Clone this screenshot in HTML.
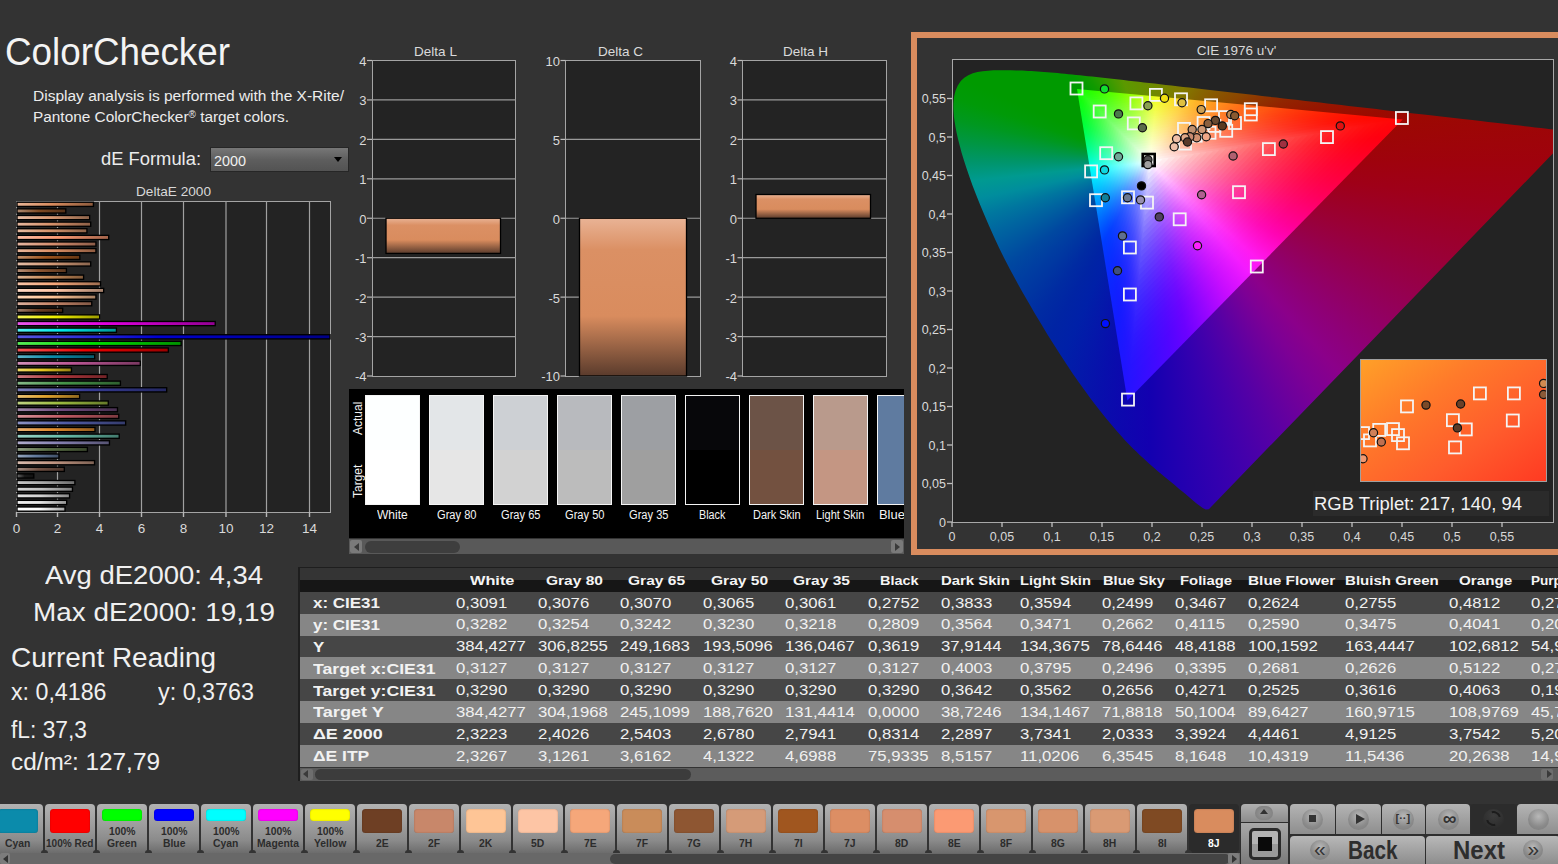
<!DOCTYPE html><html><head><meta charset="utf-8"><style>
*{margin:0;padding:0;box-sizing:border-box}
html,body{width:1558px;height:864px;overflow:hidden;background:#333333;font-family:"Liberation Sans",sans-serif;color:#ececec}
.ab{position:absolute;white-space:nowrap}
.bx{position:absolute}

</style></head><body>
<div class="ab" style="left:5.20px;top:32.83px;font-size:38.00px;line-height:38.00px;color:#f4f4f4;transform:scaleX(0.9685);transform-origin:0 0;">ColorChecker</div>
<div class="ab" style="left:33.00px;top:88.18px;font-size:15.50px;line-height:15.50px;color:#ececec;">Display analysis is performed with the X-Rite/</div>
<div class="ab" style="left:33px;top:109.18px;font-size:15.5px;line-height:15.5px;color:#ececec;transform:scaleX(0.9919);transform-origin:0 0">Pantone ColorChecker<span style="font-size:10px;vertical-align:4px;line-height:0">®</span> target colors.</div>
<div class="ab" style="left:101.00px;top:151.19px;font-size:17.50px;line-height:17.50px;color:#ececec;transform:scaleX(1.0492);transform-origin:0 0;">dE Formula:</div>
<div class="bx" style="left:209.5px;top:146.5px;width:139px;height:25px;background:linear-gradient(#777777,#5e5e5e 50%,#535353);border:1px solid #262626"></div>
<div class="ab" style="left:214.00px;top:152.88px;font-size:15.50px;line-height:15.50px;color:#f0f0f0;transform:scaleX(0.9280);transform-origin:0 0;">2000</div>
<div class="bx" style="left:334.2px;top:157.1px;width:0;height:0;border-left:4.3px solid transparent;border-right:4.3px solid transparent;border-top:5px solid #000"></div>
<div class="ab" style="left:136.00px;top:184.87px;font-size:13.50px;line-height:13.50px;color:#d8d8d8;transform:scaleX(1.0094);transform-origin:0 0;">DeltaE 2000</div>
<div class="bx" style="left:16px;top:201px;width:315px;height:312px;background:#232323;border:1px solid #a4a4a4"></div>
<svg class="bx" style="left:0;top:0" width="340" height="540"><defs><linearGradient id="bg0" x1="0" x2="1" y1="0" y2="0"><stop offset="0" stop-color="#ffffff"/><stop offset="0.45" stop-color="#ffffff"/><stop offset="1" stop-color="#a6a6a6"/></linearGradient><linearGradient id="bg1" x1="0" x2="1" y1="0" y2="0"><stop offset="0" stop-color="#efefef"/><stop offset="0.45" stop-color="#e6e6e6"/><stop offset="1" stop-color="#969696"/></linearGradient><linearGradient id="bg2" x1="0" x2="1" y1="0" y2="0"><stop offset="0" stop-color="#e2e2e2"/><stop offset="0.45" stop-color="#d2d2d2"/><stop offset="1" stop-color="#888888"/></linearGradient><linearGradient id="bg3" x1="0" x2="1" y1="0" y2="0"><stop offset="0" stop-color="#d6d6d6"/><stop offset="0.45" stop-color="#c0c0c0"/><stop offset="1" stop-color="#7d7d7d"/></linearGradient><linearGradient id="bg4" x1="0" x2="1" y1="0" y2="0"><stop offset="0" stop-color="#c6c6c6"/><stop offset="0.45" stop-color="#a8a8a8"/><stop offset="1" stop-color="#6d6d6d"/></linearGradient><linearGradient id="bg5" x1="0" x2="1" y1="0" y2="0"><stop offset="0" stop-color="#6a6a6a"/><stop offset="0.45" stop-color="#1a1a1a"/><stop offset="1" stop-color="#111111"/></linearGradient><linearGradient id="bg6" x1="0" x2="1" y1="0" y2="0"><stop offset="0" stop-color="#a48f85"/><stop offset="0.45" stop-color="#735244"/><stop offset="1" stop-color="#4b352c"/></linearGradient><linearGradient id="bg7" x1="0" x2="1" y1="0" y2="0"><stop offset="0" stop-color="#d7bbae"/><stop offset="0.45" stop-color="#c29682"/><stop offset="1" stop-color="#7e6254"/></linearGradient><linearGradient id="bg8" x1="0" x2="1" y1="0" y2="0"><stop offset="0" stop-color="#99a9bf"/><stop offset="0.45" stop-color="#627a9d"/><stop offset="1" stop-color="#404f66"/></linearGradient><linearGradient id="bg9" x1="0" x2="1" y1="0" y2="0"><stop offset="0" stop-color="#929f85"/><stop offset="0.45" stop-color="#576c43"/><stop offset="1" stop-color="#39462c"/></linearGradient><linearGradient id="bg10" x1="0" x2="1" y1="0" y2="0"><stop offset="0" stop-color="#b0accc"/><stop offset="0.45" stop-color="#8580b1"/><stop offset="1" stop-color="#565373"/></linearGradient><linearGradient id="bg11" x1="0" x2="1" y1="0" y2="0"><stop offset="0" stop-color="#9cd4c8"/><stop offset="0.45" stop-color="#67bdaa"/><stop offset="1" stop-color="#437b6e"/></linearGradient><linearGradient id="bg12" x1="0" x2="1" y1="0" y2="0"><stop offset="0" stop-color="#ebb376"/><stop offset="0.45" stop-color="#e08a2c"/><stop offset="1" stop-color="#925a1d"/></linearGradient><linearGradient id="bg13" x1="0" x2="1" y1="0" y2="0"><stop offset="0" stop-color="#8d94c5"/><stop offset="0.45" stop-color="#505ba6"/><stop offset="1" stop-color="#343b6c"/></linearGradient><linearGradient id="bg14" x1="0" x2="1" y1="0" y2="0"><stop offset="0" stop-color="#d7949a"/><stop offset="0.45" stop-color="#c15a63"/><stop offset="1" stop-color="#7d3a40"/></linearGradient><linearGradient id="bg15" x1="0" x2="1" y1="0" y2="0"><stop offset="0" stop-color="#a189aa"/><stop offset="0.45" stop-color="#6e4a7c"/><stop offset="1" stop-color="#483051"/></linearGradient><linearGradient id="bg16" x1="0" x2="1" y1="0" y2="0"><stop offset="0" stop-color="#bfd383"/><stop offset="0.45" stop-color="#9dbc40"/><stop offset="1" stop-color="#667a2a"/></linearGradient><linearGradient id="bg17" x1="0" x2="1" y1="0" y2="0"><stop offset="0" stop-color="#ebc377"/><stop offset="0.45" stop-color="#e0a32e"/><stop offset="1" stop-color="#926a1e"/></linearGradient><linearGradient id="bg18" x1="0" x2="1" y1="0" y2="0"><stop offset="0" stop-color="#7e81bb"/><stop offset="0.45" stop-color="#383d96"/><stop offset="1" stop-color="#242862"/></linearGradient><linearGradient id="bg19" x1="0" x2="1" y1="0" y2="0"><stop offset="0" stop-color="#87b989"/><stop offset="0.45" stop-color="#469449"/><stop offset="1" stop-color="#2e602f"/></linearGradient><linearGradient id="bg20" x1="0" x2="1" y1="0" y2="0"><stop offset="0" stop-color="#cb7c80"/><stop offset="0.45" stop-color="#af363c"/><stop offset="1" stop-color="#722327"/></linearGradient><linearGradient id="bg21" x1="0" x2="1" y1="0" y2="0"><stop offset="0" stop-color="#efdb6d"/><stop offset="0.45" stop-color="#e7c71f"/><stop offset="1" stop-color="#968114"/></linearGradient><linearGradient id="bg22" x1="0" x2="1" y1="0" y2="0"><stop offset="0" stop-color="#d391ba"/><stop offset="0.45" stop-color="#bb5695"/><stop offset="1" stop-color="#7a3861"/></linearGradient><linearGradient id="bg23" x1="0" x2="1" y1="0" y2="0"><stop offset="0" stop-color="#61b4c8"/><stop offset="0.45" stop-color="#0c8caa"/><stop offset="1" stop-color="#085b6e"/></linearGradient><linearGradient id="bg24" x1="0" x2="1" y1="0" y2="0"><stop offset="0" stop-color="#f45959"/><stop offset="0.45" stop-color="#ee0000"/><stop offset="1" stop-color="#9b0000"/></linearGradient><linearGradient id="bg25" x1="0" x2="1" y1="0" y2="0"><stop offset="0" stop-color="#59eb59"/><stop offset="0.45" stop-color="#00e000"/><stop offset="1" stop-color="#009200"/></linearGradient><linearGradient id="bg26" x1="0" x2="1" y1="0" y2="0"><stop offset="0" stop-color="#5959e0"/><stop offset="0.45" stop-color="#0000d0"/><stop offset="1" stop-color="#000087"/></linearGradient><linearGradient id="bg27" x1="0" x2="1" y1="0" y2="0"><stop offset="0" stop-color="#59f0f0"/><stop offset="0.45" stop-color="#00e8e8"/><stop offset="1" stop-color="#009797"/></linearGradient><linearGradient id="bg28" x1="0" x2="1" y1="0" y2="0"><stop offset="0" stop-color="#eb59eb"/><stop offset="0.45" stop-color="#e000e0"/><stop offset="1" stop-color="#920092"/></linearGradient><linearGradient id="bg29" x1="0" x2="1" y1="0" y2="0"><stop offset="0" stop-color="#f5f559"/><stop offset="0.45" stop-color="#f0f000"/><stop offset="1" stop-color="#9c9c00"/></linearGradient><linearGradient id="bg30" x1="0" x2="1" y1="0" y2="0"><stop offset="0" stop-color="#a18271"/><stop offset="0.45" stop-color="#6e3f24"/><stop offset="1" stop-color="#482917"/></linearGradient><linearGradient id="bg31" x1="0" x2="1" y1="0" y2="0"><stop offset="0" stop-color="#dbb19e"/><stop offset="0.45" stop-color="#c8876a"/><stop offset="1" stop-color="#825845"/></linearGradient><linearGradient id="bg32" x1="0" x2="1" y1="0" y2="0"><stop offset="0" stop-color="#fed9bb"/><stop offset="0.45" stop-color="#fec596"/><stop offset="1" stop-color="#a58062"/></linearGradient><linearGradient id="bg33" x1="0" x2="1" y1="0" y2="0"><stop offset="0" stop-color="#fed9c4"/><stop offset="0.45" stop-color="#fdc5a5"/><stop offset="1" stop-color="#a4806b"/></linearGradient><linearGradient id="bg34" x1="0" x2="1" y1="0" y2="0"><stop offset="0" stop-color="#f8c6a9"/><stop offset="0.45" stop-color="#f5a77a"/><stop offset="1" stop-color="#9f6d4f"/></linearGradient><linearGradient id="bg35" x1="0" x2="1" y1="0" y2="0"><stop offset="0" stop-color="#dcb494"/><stop offset="0.45" stop-color="#c98c5a"/><stop offset="1" stop-color="#835b3a"/></linearGradient><linearGradient id="bg36" x1="0" x2="1" y1="0" y2="0"><stop offset="0" stop-color="#b6917a"/><stop offset="0.45" stop-color="#8e5632"/><stop offset="1" stop-color="#5c3820"/></linearGradient><linearGradient id="bg37" x1="0" x2="1" y1="0" y2="0"><stop offset="0" stop-color="#e4bea7"/><stop offset="0.45" stop-color="#d59b78"/><stop offset="1" stop-color="#8a654e"/></linearGradient><linearGradient id="bg38" x1="0" x2="1" y1="0" y2="0"><stop offset="0" stop-color="#c1916d"/><stop offset="0.45" stop-color="#a0561f"/><stop offset="1" stop-color="#683814"/></linearGradient><linearGradient id="bg39" x1="0" x2="1" y1="0" y2="0"><stop offset="0" stop-color="#e8b69a"/><stop offset="0.45" stop-color="#dc8e64"/><stop offset="1" stop-color="#8f5c41"/></linearGradient><linearGradient id="bg40" x1="0" x2="1" y1="0" y2="0"><stop offset="0" stop-color="#e4b6a1"/><stop offset="0.45" stop-color="#d68e6e"/><stop offset="1" stop-color="#8b5c48"/></linearGradient><linearGradient id="bg41" x1="0" x2="1" y1="0" y2="0"><stop offset="0" stop-color="#fcbda4"/><stop offset="0.45" stop-color="#fb9a73"/><stop offset="1" stop-color="#a3644b"/></linearGradient><linearGradient id="bg42" x1="0" x2="1" y1="0" y2="0"><stop offset="0" stop-color="#e6bba1"/><stop offset="0.45" stop-color="#d8966e"/><stop offset="1" stop-color="#8c6248"/></linearGradient><linearGradient id="bg43" x1="0" x2="1" y1="0" y2="0"><stop offset="0" stop-color="#e5b89f"/><stop offset="0.45" stop-color="#d7926b"/><stop offset="1" stop-color="#8c5f46"/></linearGradient><linearGradient id="bg44" x1="0" x2="1" y1="0" y2="0"><stop offset="0" stop-color="#e6bda5"/><stop offset="0.45" stop-color="#d99a74"/><stop offset="1" stop-color="#8d644b"/></linearGradient><linearGradient id="bg45" x1="0" x2="1" y1="0" y2="0"><stop offset="0" stop-color="#ac8970"/><stop offset="0.45" stop-color="#7f4a23"/><stop offset="1" stop-color="#533017"/></linearGradient><linearGradient id="bg46" x1="0" x2="1" y1="0" y2="0"><stop offset="0" stop-color="#e6b496"/><stop offset="0.45" stop-color="#d98c5e"/><stop offset="1" stop-color="#8d5b3d"/></linearGradient></defs><line x1="57.5" y1="201" x2="57.5" y2="512.5" stroke="#a0a0a0" stroke-width="1.2"/><line x1="57.5" y1="512" x2="57.5" y2="517" stroke="#b8b8b8" stroke-width="1.4"/><line x1="99.5" y1="201" x2="99.5" y2="512.5" stroke="#a0a0a0" stroke-width="1.2"/><line x1="99.5" y1="512" x2="99.5" y2="517" stroke="#b8b8b8" stroke-width="1.4"/><line x1="141.5" y1="201" x2="141.5" y2="512.5" stroke="#a0a0a0" stroke-width="1.2"/><line x1="141.5" y1="512" x2="141.5" y2="517" stroke="#b8b8b8" stroke-width="1.4"/><line x1="183.5" y1="201" x2="183.5" y2="512.5" stroke="#a0a0a0" stroke-width="1.2"/><line x1="183.5" y1="512" x2="183.5" y2="517" stroke="#b8b8b8" stroke-width="1.4"/><line x1="226.0" y1="201" x2="226.0" y2="512.5" stroke="#a0a0a0" stroke-width="1.2"/><line x1="226.0" y1="512" x2="226.0" y2="517" stroke="#b8b8b8" stroke-width="1.4"/><line x1="266.5" y1="201" x2="266.5" y2="512.5" stroke="#a0a0a0" stroke-width="1.2"/><line x1="266.5" y1="512" x2="266.5" y2="517" stroke="#b8b8b8" stroke-width="1.4"/><line x1="309.5" y1="201" x2="309.5" y2="512.5" stroke="#a0a0a0" stroke-width="1.2"/><line x1="309.5" y1="512" x2="309.5" y2="517" stroke="#b8b8b8" stroke-width="1.4"/><line x1="16.5" y1="512" x2="16.5" y2="517" stroke="#b8b8b8" stroke-width="1.4"/><rect x="17" y="506.99" width="48.01" height="4.2" fill="url(#bg0)" stroke="#000" stroke-width="1.35"/><rect x="17" y="500.36" width="49.69" height="4.2" fill="url(#bg1)" stroke="#000" stroke-width="1.35"/><rect x="17" y="493.74" width="52.57" height="4.2" fill="url(#bg2)" stroke="#000" stroke-width="1.35"/><rect x="17" y="487.11" width="55.45" height="4.2" fill="url(#bg3)" stroke="#000" stroke-width="1.35"/><rect x="17" y="480.49" width="57.88" height="4.2" fill="url(#bg4)" stroke="#000" stroke-width="1.35"/><rect x="17" y="473.86" width="16.80" height="4.2" fill="url(#bg5)" stroke="#000" stroke-width="1.35"/><rect x="17" y="467.23" width="47.32" height="4.2" fill="url(#bg6)" stroke="#000" stroke-width="1.35"/><rect x="17" y="460.61" width="77.55" height="4.2" fill="url(#bg7)" stroke="#000" stroke-width="1.35"/><rect x="17" y="453.98" width="41.96" height="4.2" fill="url(#bg8)" stroke="#000" stroke-width="1.35"/><rect x="17" y="447.36" width="70.40" height="4.2" fill="url(#bg9)" stroke="#000" stroke-width="1.35"/><rect x="17" y="440.73" width="92.46" height="4.2" fill="url(#bg10)" stroke="#000" stroke-width="1.35"/><rect x="17" y="434.11" width="102.22" height="4.2" fill="url(#bg11)" stroke="#000" stroke-width="1.35"/><rect x="17" y="427.48" width="77.98" height="4.2" fill="url(#bg12)" stroke="#000" stroke-width="1.35"/><rect x="17" y="420.86" width="108.65" height="4.2" fill="url(#bg13)" stroke="#000" stroke-width="1.35"/><rect x="17" y="414.23" width="101.75" height="4.2" fill="url(#bg14)" stroke="#000" stroke-width="1.35"/><rect x="17" y="407.60" width="100.49" height="4.2" fill="url(#bg15)" stroke="#000" stroke-width="1.35"/><rect x="17" y="400.98" width="91.28" height="4.2" fill="url(#bg16)" stroke="#000" stroke-width="1.35"/><rect x="17" y="394.35" width="62.61" height="4.2" fill="url(#bg17)" stroke="#000" stroke-width="1.35"/><rect x="17" y="387.73" width="149.68" height="4.2" fill="url(#bg18)" stroke="#000" stroke-width="1.35"/><rect x="17" y="381.10" width="103.42" height="4.2" fill="url(#bg19)" stroke="#000" stroke-width="1.35"/><rect x="17" y="374.48" width="90.24" height="4.2" fill="url(#bg20)" stroke="#000" stroke-width="1.35"/><rect x="17" y="367.85" width="54.45" height="4.2" fill="url(#bg21)" stroke="#000" stroke-width="1.35"/><rect x="17" y="361.23" width="123.31" height="4.2" fill="url(#bg22)" stroke="#000" stroke-width="1.35"/><rect x="17" y="354.60" width="77.68" height="4.2" fill="url(#bg23)" stroke="#000" stroke-width="1.35"/><rect x="17" y="347.97" width="151.35" height="4.2" fill="url(#bg24)" stroke="#000" stroke-width="1.35"/><rect x="17" y="341.35" width="164.12" height="4.2" fill="url(#bg25)" stroke="#000" stroke-width="1.35"/><rect x="17" y="334.72" width="313.00" height="4.2" fill="url(#bg26)" stroke="#000" stroke-width="1.35"/><rect x="17" y="328.10" width="99.45" height="4.2" fill="url(#bg27)" stroke="#000" stroke-width="1.35"/><rect x="17" y="321.47" width="198.24" height="4.2" fill="url(#bg28)" stroke="#000" stroke-width="1.35"/><rect x="17" y="314.85" width="82.70" height="4.2" fill="url(#bg29)" stroke="#000" stroke-width="1.35"/><rect x="17" y="308.22" width="45.66" height="4.2" fill="url(#bg30)" stroke="#000" stroke-width="1.35"/><rect x="17" y="301.60" width="74.75" height="4.2" fill="url(#bg31)" stroke="#000" stroke-width="1.35"/><rect x="17" y="294.97" width="78.93" height="4.2" fill="url(#bg32)" stroke="#000" stroke-width="1.35"/><rect x="17" y="288.34" width="86.68" height="4.2" fill="url(#bg33)" stroke="#000" stroke-width="1.35"/><rect x="17" y="281.72" width="83.54" height="4.2" fill="url(#bg34)" stroke="#000" stroke-width="1.35"/><rect x="17" y="275.09" width="66.59" height="4.2" fill="url(#bg35)" stroke="#000" stroke-width="1.35"/><rect x="17" y="268.47" width="49.42" height="4.2" fill="url(#bg36)" stroke="#000" stroke-width="1.35"/><rect x="17" y="261.84" width="73.70" height="4.2" fill="url(#bg37)" stroke="#000" stroke-width="1.35"/><rect x="17" y="255.22" width="62.82" height="4.2" fill="url(#bg38)" stroke="#000" stroke-width="1.35"/><rect x="17" y="248.59" width="78.93" height="4.2" fill="url(#bg39)" stroke="#000" stroke-width="1.35"/><rect x="17" y="241.97" width="78.93" height="4.2" fill="url(#bg40)" stroke="#000" stroke-width="1.35"/><rect x="17" y="235.34" width="91.70" height="4.2" fill="url(#bg41)" stroke="#000" stroke-width="1.35"/><rect x="17" y="228.71" width="69.93" height="4.2" fill="url(#bg42)" stroke="#000" stroke-width="1.35"/><rect x="17" y="222.09" width="73.70" height="4.2" fill="url(#bg43)" stroke="#000" stroke-width="1.35"/><rect x="17" y="215.46" width="72.66" height="4.2" fill="url(#bg44)" stroke="#000" stroke-width="1.35"/><rect x="17" y="208.84" width="48.79" height="4.2" fill="url(#bg45)" stroke="#000" stroke-width="1.35"/><rect x="17" y="202.21" width="76.42" height="4.2" fill="url(#bg46)" stroke="#000" stroke-width="1.35"/></svg>
<div class="ab" style="left:12.75px;top:521.97px;font-size:13.50px;line-height:13.50px;color:#dadada;">0</div>
<div class="ab" style="left:53.75px;top:521.97px;font-size:13.50px;line-height:13.50px;color:#dadada;">2</div>
<div class="ab" style="left:95.75px;top:521.97px;font-size:13.50px;line-height:13.50px;color:#dadada;">4</div>
<div class="ab" style="left:137.75px;top:521.97px;font-size:13.50px;line-height:13.50px;color:#dadada;">6</div>
<div class="ab" style="left:179.75px;top:521.97px;font-size:13.50px;line-height:13.50px;color:#dadada;">8</div>
<div class="ab" style="left:218.49px;top:521.97px;font-size:13.50px;line-height:13.50px;color:#dadada;">10</div>
<div class="ab" style="left:258.99px;top:521.97px;font-size:13.50px;line-height:13.50px;color:#dadada;">12</div>
<div class="ab" style="left:301.99px;top:521.97px;font-size:13.50px;line-height:13.50px;color:#dadada;">14</div>
<div class="bx" style="left:371.5px;top:60.0px;width:144.5px;height:316.5px;background:#232323;border:1px solid #a4a4a4"></div>
<svg class="bx" style="left:0;top:0" width="910" height="390"><line x1="367.0" y1="60.50" x2="372.0" y2="60.50" stroke="#bbbbbb" stroke-width="1.2"/><line x1="372.0" y1="99.94" x2="515.5" y2="99.94" stroke="#9a9a9a" stroke-width="1.2"/><line x1="367.0" y1="99.94" x2="372.0" y2="99.94" stroke="#bbbbbb" stroke-width="1.2"/><line x1="372.0" y1="139.38" x2="515.5" y2="139.38" stroke="#9a9a9a" stroke-width="1.2"/><line x1="367.0" y1="139.38" x2="372.0" y2="139.38" stroke="#bbbbbb" stroke-width="1.2"/><line x1="372.0" y1="178.81" x2="515.5" y2="178.81" stroke="#9a9a9a" stroke-width="1.2"/><line x1="367.0" y1="178.81" x2="372.0" y2="178.81" stroke="#bbbbbb" stroke-width="1.2"/><line x1="372.0" y1="218.25" x2="515.5" y2="218.25" stroke="#9a9a9a" stroke-width="1.2"/><line x1="367.0" y1="218.25" x2="372.0" y2="218.25" stroke="#bbbbbb" stroke-width="1.2"/><line x1="372.0" y1="257.69" x2="515.5" y2="257.69" stroke="#9a9a9a" stroke-width="1.2"/><line x1="367.0" y1="257.69" x2="372.0" y2="257.69" stroke="#bbbbbb" stroke-width="1.2"/><line x1="372.0" y1="297.12" x2="515.5" y2="297.12" stroke="#9a9a9a" stroke-width="1.2"/><line x1="367.0" y1="297.12" x2="372.0" y2="297.12" stroke="#bbbbbb" stroke-width="1.2"/><line x1="372.0" y1="336.56" x2="515.5" y2="336.56" stroke="#9a9a9a" stroke-width="1.2"/><line x1="367.0" y1="336.56" x2="372.0" y2="336.56" stroke="#bbbbbb" stroke-width="1.2"/><line x1="367.0" y1="376.00" x2="372.0" y2="376.00" stroke="#bbbbbb" stroke-width="1.2"/><defs><linearGradient id="dgL" x1="0" x2="0" y1="0" y2="1"><stop offset="0" stop-color="#e9b395"/><stop offset="0.2" stop-color="#db9064"/><stop offset="0.62" stop-color="#d98c5e"/><stop offset="1" stop-color="#5a3b2c"/></linearGradient></defs><rect x="386.0" y="218.2" width="114.5" height="35.2" fill="url(#dgL)" stroke="#000" stroke-width="1.3"/></svg>
<div class="ab" style="left:414.11px;top:44.87px;font-size:13.50px;line-height:13.50px;color:#dadada;">Delta L</div>
<div class="ab" style="left:359.27px;top:54.90px;font-size:13.00px;line-height:13.00px;color:#dadada;">4</div>
<div class="ab" style="left:359.27px;top:94.33px;font-size:13.00px;line-height:13.00px;color:#dadada;">3</div>
<div class="ab" style="left:359.27px;top:133.77px;font-size:13.00px;line-height:13.00px;color:#dadada;">2</div>
<div class="ab" style="left:359.27px;top:173.21px;font-size:13.00px;line-height:13.00px;color:#dadada;">1</div>
<div class="ab" style="left:359.27px;top:212.65px;font-size:13.00px;line-height:13.00px;color:#dadada;">0</div>
<div class="ab" style="left:354.94px;top:252.08px;font-size:13.00px;line-height:13.00px;color:#dadada;">-1</div>
<div class="ab" style="left:354.94px;top:291.52px;font-size:13.00px;line-height:13.00px;color:#dadada;">-2</div>
<div class="ab" style="left:354.94px;top:330.96px;font-size:13.00px;line-height:13.00px;color:#dadada;">-3</div>
<div class="ab" style="left:354.94px;top:370.40px;font-size:13.00px;line-height:13.00px;color:#dadada;">-4</div>
<div class="bx" style="left:565.0px;top:60.0px;width:136.0px;height:316.5px;background:#232323;border:1px solid #a4a4a4"></div>
<svg class="bx" style="left:0;top:0" width="910" height="390"><line x1="560.5" y1="60.50" x2="565.5" y2="60.50" stroke="#bbbbbb" stroke-width="1.2"/><line x1="565.5" y1="139.38" x2="700.5" y2="139.38" stroke="#9a9a9a" stroke-width="1.2"/><line x1="560.5" y1="139.38" x2="565.5" y2="139.38" stroke="#bbbbbb" stroke-width="1.2"/><line x1="565.5" y1="218.25" x2="700.5" y2="218.25" stroke="#9a9a9a" stroke-width="1.2"/><line x1="560.5" y1="218.25" x2="565.5" y2="218.25" stroke="#bbbbbb" stroke-width="1.2"/><line x1="565.5" y1="297.12" x2="700.5" y2="297.12" stroke="#9a9a9a" stroke-width="1.2"/><line x1="560.5" y1="297.12" x2="565.5" y2="297.12" stroke="#bbbbbb" stroke-width="1.2"/><line x1="560.5" y1="376.00" x2="565.5" y2="376.00" stroke="#bbbbbb" stroke-width="1.2"/><defs><linearGradient id="dgC" x1="0" x2="0" y1="0" y2="1"><stop offset="0" stop-color="#e9b395"/><stop offset="0.2" stop-color="#db9064"/><stop offset="0.62" stop-color="#d98c5e"/><stop offset="1" stop-color="#5a3b2c"/></linearGradient></defs><rect x="579.5" y="218.2" width="107.0" height="157.8" fill="url(#dgC)" stroke="#000" stroke-width="1.3"/></svg>
<div class="ab" style="left:597.99px;top:44.87px;font-size:13.50px;line-height:13.50px;color:#dadada;">Delta C</div>
<div class="ab" style="left:545.54px;top:54.90px;font-size:13.00px;line-height:13.00px;color:#dadada;">10</div>
<div class="ab" style="left:552.77px;top:133.77px;font-size:13.00px;line-height:13.00px;color:#dadada;">5</div>
<div class="ab" style="left:552.77px;top:212.65px;font-size:13.00px;line-height:13.00px;color:#dadada;">0</div>
<div class="ab" style="left:548.44px;top:291.52px;font-size:13.00px;line-height:13.00px;color:#dadada;">-5</div>
<div class="ab" style="left:541.21px;top:370.40px;font-size:13.00px;line-height:13.00px;color:#dadada;">-10</div>
<div class="bx" style="left:742.0px;top:60.0px;width:145.0px;height:316.5px;background:#232323;border:1px solid #a4a4a4"></div>
<svg class="bx" style="left:0;top:0" width="910" height="390"><line x1="737.5" y1="60.50" x2="742.5" y2="60.50" stroke="#bbbbbb" stroke-width="1.2"/><line x1="742.5" y1="99.94" x2="886.5" y2="99.94" stroke="#9a9a9a" stroke-width="1.2"/><line x1="737.5" y1="99.94" x2="742.5" y2="99.94" stroke="#bbbbbb" stroke-width="1.2"/><line x1="742.5" y1="139.38" x2="886.5" y2="139.38" stroke="#9a9a9a" stroke-width="1.2"/><line x1="737.5" y1="139.38" x2="742.5" y2="139.38" stroke="#bbbbbb" stroke-width="1.2"/><line x1="742.5" y1="178.81" x2="886.5" y2="178.81" stroke="#9a9a9a" stroke-width="1.2"/><line x1="737.5" y1="178.81" x2="742.5" y2="178.81" stroke="#bbbbbb" stroke-width="1.2"/><line x1="742.5" y1="218.25" x2="886.5" y2="218.25" stroke="#9a9a9a" stroke-width="1.2"/><line x1="737.5" y1="218.25" x2="742.5" y2="218.25" stroke="#bbbbbb" stroke-width="1.2"/><line x1="742.5" y1="257.69" x2="886.5" y2="257.69" stroke="#9a9a9a" stroke-width="1.2"/><line x1="737.5" y1="257.69" x2="742.5" y2="257.69" stroke="#bbbbbb" stroke-width="1.2"/><line x1="742.5" y1="297.12" x2="886.5" y2="297.12" stroke="#9a9a9a" stroke-width="1.2"/><line x1="737.5" y1="297.12" x2="742.5" y2="297.12" stroke="#bbbbbb" stroke-width="1.2"/><line x1="742.5" y1="336.56" x2="886.5" y2="336.56" stroke="#9a9a9a" stroke-width="1.2"/><line x1="737.5" y1="336.56" x2="742.5" y2="336.56" stroke="#bbbbbb" stroke-width="1.2"/><line x1="737.5" y1="376.00" x2="742.5" y2="376.00" stroke="#bbbbbb" stroke-width="1.2"/><defs><linearGradient id="dgH" x1="0" x2="0" y1="0" y2="1"><stop offset="0" stop-color="#e9b395"/><stop offset="0.2" stop-color="#db9064"/><stop offset="0.62" stop-color="#d98c5e"/><stop offset="1" stop-color="#5a3b2c"/></linearGradient></defs><rect x="756.0" y="194.5" width="114.5" height="23.8" fill="url(#dgH)" stroke="#000" stroke-width="1.3"/></svg>
<div class="ab" style="left:782.99px;top:44.87px;font-size:13.50px;line-height:13.50px;color:#dadada;">Delta H</div>
<div class="ab" style="left:729.77px;top:54.90px;font-size:13.00px;line-height:13.00px;color:#dadada;">4</div>
<div class="ab" style="left:729.77px;top:94.33px;font-size:13.00px;line-height:13.00px;color:#dadada;">3</div>
<div class="ab" style="left:729.77px;top:133.77px;font-size:13.00px;line-height:13.00px;color:#dadada;">2</div>
<div class="ab" style="left:729.77px;top:173.21px;font-size:13.00px;line-height:13.00px;color:#dadada;">1</div>
<div class="ab" style="left:729.77px;top:212.65px;font-size:13.00px;line-height:13.00px;color:#dadada;">0</div>
<div class="ab" style="left:725.44px;top:252.08px;font-size:13.00px;line-height:13.00px;color:#dadada;">-1</div>
<div class="ab" style="left:725.44px;top:291.52px;font-size:13.00px;line-height:13.00px;color:#dadada;">-2</div>
<div class="ab" style="left:725.44px;top:330.96px;font-size:13.00px;line-height:13.00px;color:#dadada;">-3</div>
<div class="ab" style="left:725.44px;top:370.40px;font-size:13.00px;line-height:13.00px;color:#dadada;">-4</div>
<div class="bx" style="left:349px;top:389px;width:555px;height:149px;background:#000;overflow:hidden">
<div class="bx" style="left:16px;top:6px;width:55px;height:110px;border:1.5px solid #f4f4f4;background:linear-gradient(#fdffff 0,#fdffff 50%,#ffffff 50%,#ffffff 100%)"></div>
<div class="bx" style="left:80px;top:6px;width:55px;height:110px;border:1.5px solid #f4f4f4;background:linear-gradient(#e3e6e8 0,#e3e6e8 50%,#e6e6e6 50%,#e6e6e6 100%)"></div>
<div class="bx" style="left:144px;top:6px;width:55px;height:110px;border:1.5px solid #f4f4f4;background:linear-gradient(#cdd0d4 0,#cdd0d4 50%,#d2d2d2 50%,#d2d2d2 100%)"></div>
<div class="bx" style="left:208px;top:6px;width:55px;height:110px;border:1.5px solid #f4f4f4;background:linear-gradient(#b8babe 0,#b8babe 50%,#bcbcbc 50%,#bcbcbc 100%)"></div>
<div class="bx" style="left:272px;top:6px;width:55px;height:110px;border:1.5px solid #f4f4f4;background:linear-gradient(#9d9fa3 0,#9d9fa3 50%,#9f9f9f 50%,#9f9f9f 100%)"></div>
<div class="bx" style="left:336px;top:6px;width:55px;height:110px;border:1.5px solid #f4f4f4;background:linear-gradient(#07070a 0,#07070a 50%,#000000 50%,#000000 100%)"></div>
<div class="bx" style="left:400px;top:6px;width:55px;height:110px;border:1.5px solid #f4f4f4;background:linear-gradient(#6c5347 0,#6c5347 50%,#735140 50%,#735140 100%)"></div>
<div class="bx" style="left:464px;top:6px;width:55px;height:110px;border:1.5px solid #f4f4f4;background:linear-gradient(#b99a8c 0,#b99a8c 50%,#c49683 50%,#c49683 100%)"></div>
<div class="bx" style="left:528px;top:6px;width:55px;height:110px;border:1.5px solid #f4f4f4;background:linear-gradient(#5f7ba0 0,#5f7ba0 50%,#5f7ba0 50%,#5f7ba0 100%)"></div>
</div>
<div class="ab" style="left:377.15px;top:509.42px;font-size:12.50px;line-height:12.50px;color:#f4f4f4;transform:scaleX(0.9608);transform-origin:0 0;">White</div>
<div class="ab" style="left:436.75px;top:509.42px;font-size:12.50px;line-height:12.50px;color:#f4f4f4;transform:scaleX(0.8883);transform-origin:0 0;">Gray 80</div>
<div class="ab" style="left:500.75px;top:509.42px;font-size:12.50px;line-height:12.50px;color:#f4f4f4;transform:scaleX(0.8883);transform-origin:0 0;">Gray 65</div>
<div class="ab" style="left:564.75px;top:509.42px;font-size:12.50px;line-height:12.50px;color:#f4f4f4;transform:scaleX(0.8883);transform-origin:0 0;">Gray 50</div>
<div class="ab" style="left:628.75px;top:509.42px;font-size:12.50px;line-height:12.50px;color:#f4f4f4;transform:scaleX(0.8883);transform-origin:0 0;">Gray 35</div>
<div class="ab" style="left:699.35px;top:509.42px;font-size:12.50px;line-height:12.50px;color:#f4f4f4;transform:scaleX(0.8604);transform-origin:0 0;">Black</div>
<div class="ab" style="left:752.70px;top:509.42px;font-size:12.50px;line-height:12.50px;color:#f4f4f4;transform:scaleX(0.8785);transform-origin:0 0;">Dark Skin</div>
<div class="ab" style="left:816.35px;top:509.42px;font-size:12.50px;line-height:12.50px;color:#f4f4f4;transform:scaleX(0.8798);transform-origin:0 0;">Light Skin</div>
<div class="ab" style="left:879.00px;top:509.42px;font-size:12.50px;line-height:12.50px;color:#f4f4f4;transform:scaleX(1.0339);transform-origin:0 0;">Blue Sky</div>
<div class="bx" style="left:904px;top:500px;width:7px;height:30px;background:#333"></div>
<div class="ab" style="left:342.5px;top:414px;width:30px;font-size:12px;line-height:12px;color:#f0f0f0;transform:rotate(-90deg);text-align:center">Actual</div>
<div class="ab" style="left:342.5px;top:477px;width:30px;font-size:12px;line-height:12px;color:#f0f0f0;transform:rotate(-90deg);text-align:center">Target</div>
<div class="bx" style="left:349px;top:539px;width:555px;height:15px;background:#595959"></div>
<div class="bx" style="left:365px;top:540.5px;width:95px;height:12px;border-radius:6px;background:#3e3e3e"></div>
<div class="bx" style="left:350px;top:540px;width:12px;height:13px;border-radius:2px;background:#7a7a7a"></div>
<div class="bx" style="left:890.5px;top:540px;width:12px;height:13px;border-radius:2px;background:#7a7a7a"></div>
<div class="bx" style="left:353.5px;top:542.5px;width:0;height:0;border-top:4px solid transparent;border-bottom:4px solid transparent;border-right:5px solid #3a3a3a"></div>
<div class="bx" style="left:894.5px;top:542.5px;width:0;height:0;border-top:4px solid transparent;border-bottom:4px solid transparent;border-left:5px solid #3a3a3a"></div>
<div class="ab" style="left:45.00px;top:562.81px;font-size:25.50px;line-height:25.50px;color:#f0f0f0;transform:scaleX(1.0777);transform-origin:0 0;">Avg dE2000: 4,34</div>
<div class="ab" style="left:33.20px;top:600.01px;font-size:25.50px;line-height:25.50px;color:#f0f0f0;transform:scaleX(1.0942);transform-origin:0 0;">Max dE2000: 19,19</div>
<div class="ab" style="left:11.40px;top:643.72px;font-size:27.50px;line-height:27.50px;color:#f0f0f0;transform:scaleX(1.0159);transform-origin:0 0;">Current Reading</div>
<div class="ab" style="left:11.40px;top:681.33px;font-size:23.00px;line-height:23.00px;color:#f0f0f0;transform:scaleX(1.0092);transform-origin:0 0;">x: 0,4186</div>
<div class="ab" style="left:157.70px;top:681.33px;font-size:23.00px;line-height:23.00px;color:#f0f0f0;transform:scaleX(1.0145);transform-origin:0 0;">y: 0,3763</div>
<div class="ab" style="left:11.40px;top:718.53px;font-size:23.00px;line-height:23.00px;color:#f0f0f0;transform:scaleX(0.9905);transform-origin:0 0;">fL: 37,3</div>
<div class="ab" style="left:11.40px;top:751.43px;font-size:23.00px;line-height:23.00px;color:#f0f0f0;transform:scaleX(1.0595);transform-origin:0 0;">cd/m²: 127,79</div>
<div class="bx" style="left:911px;top:32px;width:653px;height:523px;border:6px solid #d98c5e;background:#333"></div>
<div class="ab" style="left:1196.77px;top:44.07px;font-size:13.50px;line-height:13.50px;color:#d8d8d8;">CIE 1976 u'v'</div>
<div class="bx" style="left:952px;top:59.5px;width:601.5px;height:462.5px;background:#232323;overflow:hidden">
<div class="bx" style="left:0;top:0;width:602px;height:463px;clip-path:polygon(256.8px 449.7px,253.7px 450.0px,250.7px 448.6px,247.7px 446.3px,245.2px 444.4px,242.2px 441.9px,238.7px 439.0px,236.1px 436.7px,233.2px 434.3px,230.1px 431.7px,226.6px 428.9px,222.7px 425.6px,218.4px 422.1px,213.7px 418.2px,211.3px 416.2px,208.7px 414.1px,206.1px 411.9px,203.3px 409.5px,200.5px 407.0px,197.5px 404.4px,194.3px 401.6px,191.1px 398.6px,187.7px 395.4px,184.3px 392.1px,180.7px 388.7px,177.1px 385.0px,173.2px 380.9px,169.0px 376.3px,164.5px 371.2px,159.7px 365.6px,154.6px 359.6px,149.4px 353.1px,144.1px 346.2px,138.5px 338.9px,132.8px 331.1px,126.8px 322.8px,120.8px 314.2px,114.7px 305.1px,108.5px 295.6px,102.1px 285.6px,95.6px 275.2px,89.2px 264.6px,82.8px 254.0px,76.5px 243.1px,70.1px 232.0px,63.9px 220.8px,57.8px 209.6px,52.1px 198.6px,46.8px 187.7px,41.7px 176.8px,36.9px 166.1px,32.4px 155.6px,28.2px 145.5px,24.3px 135.8px,20.7px 126.4px,17.5px 117.4px,14.5px 108.8px,11.9px 100.7px,9.6px 93.2px,7.7px 86.1px,6.0px 79.5px,4.6px 73.3px,3.5px 67.4px,2.6px 62.0px,1.9px 57.1px,1.6px 52.5px,1.4px 48.3px,1.4px 44.3px,1.7px 40.5px,2.1px 37.1px,2.8px 33.9px,3.6px 31.0px,5.8px 25.9px,8.8px 21.6px,12.3px 18.2px,16.3px 15.7px,20.8px 13.8px,25.5px 12.5px,30.7px 11.7px,36.0px 11.2px,41.5px 10.8px,47.2px 10.7px,52.9px 10.7px,58.6px 10.7px,64.3px 10.9px,70.2px 11.1px,76.2px 11.4px,79.2px 11.6px,82.3px 11.8px,85.5px 12.0px,88.7px 12.2px,92.0px 12.5px,95.3px 12.7px,98.6px 13.0px,102.1px 13.3px,105.5px 13.6px,109.1px 14.0px,112.7px 14.3px,116.4px 14.7px,120.1px 15.0px,124.0px 15.4px,127.9px 15.8px,131.9px 16.2px,135.9px 16.7px,140.1px 17.1px,144.3px 17.6px,148.7px 18.0px,153.1px 18.5px,157.6px 19.0px,162.2px 19.5px,166.9px 20.1px,171.7px 20.6px,176.6px 21.2px,181.6px 21.7px,186.7px 22.3px,191.9px 22.9px,197.2px 23.5px,202.6px 24.1px,208.1px 24.7px,213.7px 25.4px,219.4px 26.0px,225.2px 26.7px,231.2px 27.4px,237.2px 28.1px,243.3px 28.8px,249.6px 29.5px,255.9px 30.2px,262.3px 31.0px,268.9px 31.7px,275.5px 32.5px,282.3px 33.3px,289.1px 34.0px,296.0px 34.8px,302.9px 35.6px,310.0px 36.4px,317.1px 37.3px,324.3px 38.1px,331.5px 38.9px,338.8px 39.7px,346.1px 40.6px,353.5px 41.5px,360.8px 42.3px,368.1px 43.1px,375.2px 44.0px,382.4px 44.8px,389.4px 45.6px,396.5px 46.4px,403.5px 47.2px,410.5px 48.0px,417.5px 48.8px,424.4px 49.6px,431.3px 50.4px,437.9px 51.2px,444.1px 51.9px,449.7px 52.5px,455.4px 53.2px,461.7px 53.9px,469.2px 54.7px,478.4px 55.8px,488.9px 57.0px,499.9px 58.3px,510.7px 59.5px,520.3px 60.6px,528.6px 61.6px,536.3px 62.5px,543.4px 63.3px,550.1px 64.1px,556.5px 64.8px,562.4px 65.5px,567.8px 66.1px,572.8px 66.7px,577.8px 67.3px,583.0px 67.9px,588.8px 68.5px,594.8px 69.2px,600.8px 69.9px,606.3px 70.5px,610.9px 71.1px,614.6px 71.5px,617.6px 71.8px,621.9px 72.3px);background:conic-gradient(at 197.8px 101.9px,#6c8c00 0deg,#718700 6deg,#778300 12deg,#7c7e00 18deg,#827a00 24deg,#847000 30deg,#866500 36deg,#885b00 42deg,#8a5000 48deg,#8c4600 54deg,#8f3500 60deg,#922400 66deg,#961600 72deg,#9b0a00 78deg,#9d0606 84deg,#9f020d 90deg,#9f0018 96deg,#9c0027 102deg,#9a0036 108deg,#970046 114deg,#940057 120deg,#910068 126deg,#8e0079 132deg,#8b008a 138deg,#7d0095 144deg,#6a009d 150deg,#5600a5 156deg,#4400ab 162deg,#3300af 168deg,#2300b0 174deg,#1300b0 180deg,#0d07ae 186deg,#080fac 192deg,#0418aa 198deg,#0020a8 204deg,#0024a4 210deg,#002ba2 216deg,#0035a1 222deg,#003ea1 228deg,#0048a0 234deg,#0057a0 240deg,#0066a0 246deg,#00779f 252deg,#008d9d 258deg,#009a90 264deg,#00956a 270deg,#009643 276deg,#009820 282deg,#009a08 288deg,#009a00 294deg,#009a00 300deg,#009a00 306deg,#009a00 312deg,#009a00 318deg,#119a00 324deg,#2b9a00 330deg,#459a00 336deg,#5b9900 342deg,#619500 348deg,#669000 354deg,#6c8c00 360deg)"></div>
<div class="bx" style="left:0;top:0;width:602px;height:463px;clip-path:polygon(125.0px 29.4px,450.7px 59.9px,175.4px 340.9px);background:conic-gradient(at 197.8px 101.9px,#daff1a 0deg,#f1fd21 6deg,#f5f125 12deg,#f8e429 18deg,#fcd82d 24deg,#ffca2e 30deg,#ffb928 36deg,#ffa823 42deg,#ff951e 48deg,#ff7f19 54deg,#ff6915 60deg,#ff5411 66deg,#ff3008 72deg,#ff0c00 78deg,#ff0010 84deg,#ff002c 90deg,#ff0044 96deg,#ff005e 102deg,#ff007b 108deg,#ff0097 114deg,#ff04b4 120deg,#ff0ed2 126deg,#ff19f0 132deg,#f41aff 138deg,#dd13ff 144deg,#c60cff 150deg,#a908ff 156deg,#8a04ff 162deg,#6a01ff 168deg,#5105ff 174deg,#3a0cff 180deg,#2313ff 186deg,#121cff 192deg,#0c26ff 198deg,#0631ff 204deg,#003cff 210deg,#0056ff 216deg,#0070ff 222deg,#008aff 228deg,#00a3ff 234deg,#00b7ff 240deg,#00cbff 246deg,#00deff 252deg,#00f2ff 258deg,#00fff4 264deg,#00ffd2 270deg,#00ffb1 276deg,#00ff91 282deg,#00ff73 288deg,#00ff55 294deg,#01ff38 300deg,#09ff22 306deg,#10ff0b 312deg,#21ff00 318deg,#3bff00 324deg,#55ff00 330deg,#6fff00 336deg,#89ff03 342deg,#a4ff0a 348deg,#bfff12 354deg,#daff1a 360deg)"></div>
<div class="bx" style="left:0;top:0;width:602px;height:463px;clip-path:polygon(126.8px 31.2px,444.4px 60.9px,176.0px 334.9px);background:conic-gradient(at 197.8px 101.9px,#daff1f 0deg,#f1fd25 6deg,#f5f128 12deg,#f9e52c 18deg,#fcd930 24deg,#ffcb30 30deg,#ffba2a 36deg,#ffa924 42deg,#ff961f 48deg,#ff801a 54deg,#ff6a16 60deg,#ff5411 66deg,#ff3109 72deg,#ff0c01 78deg,#ff0011 84deg,#ff002c 90deg,#ff0044 96deg,#ff005e 102deg,#ff007b 108deg,#ff0097 114deg,#ff04b4 120deg,#ff0ed2 126deg,#ff19f0 132deg,#f41bff 138deg,#dd13ff 144deg,#c60cff 150deg,#a908ff 156deg,#8a04ff 162deg,#6a01ff 168deg,#5105ff 174deg,#3a0cff 180deg,#2313ff 186deg,#121cff 192deg,#0c26ff 198deg,#0631ff 204deg,#003cff 210deg,#0056ff 216deg,#0070ff 222deg,#008aff 228deg,#00a3ff 234deg,#01b7ff 240deg,#01cbff 246deg,#02deff 252deg,#02f2ff 258deg,#03fff4 264deg,#03ffd3 270deg,#03ffb2 276deg,#03ff92 282deg,#03ff75 288deg,#03ff57 294deg,#04ff3b 300deg,#0cff25 306deg,#13ff0e 312deg,#24ff03 318deg,#3eff04 324deg,#57ff04 330deg,#71ff04 336deg,#8bff07 342deg,#a6ff0f 348deg,#c0ff17 354deg,#daff1f 360deg)"></div>
<div class="bx" style="left:0;top:0;width:602px;height:463px;clip-path:polygon(128.6px 33.0px,438.1px 62.0px,176.6px 329.0px);background:conic-gradient(at 197.8px 101.9px,#dbff24 0deg,#f1fd2a 6deg,#f5f12d 12deg,#f9e530 18deg,#fcd933 24deg,#ffcc33 30deg,#ffbb2d 36deg,#ffaa27 42deg,#ff9721 48deg,#ff811c 54deg,#ff6b18 60deg,#ff5513 66deg,#ff320a 72deg,#ff0d02 78deg,#ff0112 84deg,#ff012d 90deg,#ff0145 96deg,#ff015f 102deg,#ff017b 108deg,#ff0197 114deg,#ff04b4 120deg,#ff0fd2 126deg,#ff19f0 132deg,#f41bff 138deg,#dd14ff 144deg,#c60cff 150deg,#a908ff 156deg,#8a05ff 162deg,#6b01ff 168deg,#5105ff 174deg,#3a0cff 180deg,#2313ff 186deg,#121cff 192deg,#0c27ff 198deg,#0631ff 204deg,#003cff 210deg,#0156ff 216deg,#0171ff 222deg,#018bff 228deg,#01a4ff 234deg,#02b7ff 240deg,#03cbff 246deg,#04dfff 252deg,#06f2ff 258deg,#07fff4 264deg,#07ffd4 270deg,#07ffb3 276deg,#07ff94 282deg,#07ff77 288deg,#07ff5a 294deg,#09ff3e 300deg,#10ff28 306deg,#17ff12 312deg,#28ff08 318deg,#41ff08 324deg,#5bff09 330deg,#74ff09 336deg,#8dff0c 342deg,#a7ff14 348deg,#c1ff1c 354deg,#dbff24 360deg)"></div>
<div class="bx" style="left:0;top:0;width:602px;height:463px;clip-path:polygon(130.5px 34.8px,431.7px 63.0px,177.1px 323.0px);background:conic-gradient(at 197.8px 101.9px,#dcff29 0deg,#f2fd2f 6deg,#f5f231 12deg,#f9e634 18deg,#fdda36 24deg,#ffcc36 30deg,#ffbc30 36deg,#ffab29 42deg,#ff9824 48deg,#ff821f 54deg,#ff6c1a 60deg,#ff5715 66deg,#ff330c 72deg,#ff0f03 78deg,#ff0313 84deg,#ff032e 90deg,#ff0246 96deg,#ff0260 102deg,#ff027c 108deg,#ff0298 114deg,#ff05b4 120deg,#ff0fd2 126deg,#ff1af0 132deg,#f41bff 138deg,#dd14ff 144deg,#c60dff 150deg,#a908ff 156deg,#8a05ff 162deg,#6b01ff 168deg,#5105ff 174deg,#3a0cff 180deg,#2314ff 186deg,#121cff 192deg,#0d27ff 198deg,#0732ff 204deg,#013dff 210deg,#0157ff 216deg,#0271ff 222deg,#028bff 228deg,#03a4ff 234deg,#04b8ff 240deg,#05ccff 246deg,#07dfff 252deg,#0af2ff 258deg,#0cfff4 264deg,#0cffd4 270deg,#0cffb4 276deg,#0cff96 282deg,#0cff7a 288deg,#0cff5d 294deg,#0dff42 300deg,#14ff2c 306deg,#1cff17 312deg,#2cff0c 318deg,#45ff0d 324deg,#5eff0e 330deg,#77ff0e 336deg,#90ff12 342deg,#aaff1a 348deg,#c3ff21 354deg,#dcff29 360deg)"></div>
<div class="bx" style="left:0;top:0;width:602px;height:463px;clip-path:polygon(132.3px 36.6px,425.4px 64.1px,177.7px 317.0px);background:conic-gradient(at 197.8px 101.9px,#ddff2f 0deg,#f2fd34 6deg,#f5f236 12deg,#f9e638 18deg,#fddb3a 24deg,#ffcd3a 30deg,#ffbd33 36deg,#ffac2d 42deg,#ff9927 48deg,#ff8422 54deg,#ff6e1c 60deg,#ff5817 66deg,#ff350e 72deg,#ff1105 78deg,#ff0515 84deg,#ff0430 90deg,#ff0447 96deg,#ff0461 102deg,#ff037c 108deg,#ff0398 114deg,#ff06b5 120deg,#ff10d2 126deg,#ff1af0 132deg,#f41cff 138deg,#dd14ff 144deg,#c60dff 150deg,#a908ff 156deg,#8a05ff 162deg,#6b02ff 168deg,#5105ff 174deg,#3b0dff 180deg,#2414ff 186deg,#131cff 192deg,#0d27ff 198deg,#0732ff 204deg,#023dff 210deg,#0258ff 216deg,#0372ff 222deg,#048cff 228deg,#05a5ff 234deg,#06b9ff 240deg,#08ccff 246deg,#0be0ff 252deg,#0ef3ff 258deg,#11fff5 264deg,#11ffd5 270deg,#11ffb6 276deg,#11ff98 282deg,#11ff7c 288deg,#11ff60 294deg,#12ff46 300deg,#19ff31 306deg,#20ff1c 312deg,#30ff11 318deg,#49ff12 324deg,#62ff13 330deg,#7aff14 336deg,#93ff17 342deg,#acff1f 348deg,#c4ff27 354deg,#ddff2f 360deg)"></div>
<div class="bx" style="left:0;top:0;width:602px;height:463px;clip-path:polygon(134.1px 38.4px,419.1px 65.1px,178.2px 311.0px);background:conic-gradient(at 197.8px 101.9px,#deff35 0deg,#f2fd3a 6deg,#f6f23b 12deg,#f9e73d 18deg,#fddb3f 24deg,#ffce3e 30deg,#ffbe37 36deg,#ffae30 42deg,#ff9b2a 48deg,#ff8625 54deg,#ff701f 60deg,#ff5a1a 66deg,#ff3711 72deg,#ff1308 78deg,#ff0717 84deg,#ff0631 90deg,#ff0648 96deg,#ff0662 102deg,#ff057d 108deg,#ff0599 114deg,#ff08b5 120deg,#ff11d3 126deg,#ff1bf0 132deg,#f41dff 138deg,#dd15ff 144deg,#c60eff 150deg,#aa09ff 156deg,#8a06ff 162deg,#6b02ff 168deg,#5206ff 174deg,#3b0dff 180deg,#2414ff 186deg,#131dff 192deg,#0e28ff 198deg,#0833ff 204deg,#033eff 210deg,#0358ff 216deg,#0473ff 222deg,#058dff 228deg,#07a6ff 234deg,#09b9ff 240deg,#0bcdff 246deg,#0fe0ff 252deg,#13f3ff 258deg,#16fff5 264deg,#16ffd6 270deg,#16ffb8 276deg,#16ff9b 282deg,#16ff7f 288deg,#16ff64 294deg,#18ff4a 300deg,#1eff35 306deg,#25ff21 312deg,#35ff17 318deg,#4dff18 324deg,#65ff19 330deg,#7dff1a 336deg,#95ff1d 342deg,#aeff25 348deg,#c6ff2d 354deg,#deff35 360deg)"></div>
<div class="bx" style="left:0;top:0;width:602px;height:463px;clip-path:polygon(135.9px 40.3px,412.8px 66.2px,178.8px 305.1px);background:conic-gradient(at 197.8px 101.9px,#dfff3a 0deg,#f3fd3f 6deg,#f6f240 12deg,#f9e741 18deg,#fddc43 24deg,#ffcf42 30deg,#ffbf3b 36deg,#ffaf34 42deg,#ff9d2e 48deg,#ff8728 54deg,#ff7223 60deg,#ff5d1d 66deg,#ff3a14 72deg,#ff160b 78deg,#ff0a19 84deg,#ff0933 90deg,#ff084a 96deg,#ff0863 102deg,#ff087f 108deg,#ff079a 114deg,#ff09b6 120deg,#ff13d3 126deg,#ff1df0 132deg,#f41eff 138deg,#dd16ff 144deg,#c60eff 150deg,#aa0aff 156deg,#8b06ff 162deg,#6c03ff 168deg,#5207ff 174deg,#3c0eff 180deg,#2515ff 186deg,#141eff 192deg,#0f29ff 198deg,#0934ff 204deg,#043fff 210deg,#0559ff 216deg,#0674ff 222deg,#088eff 228deg,#09a7ff 234deg,#0cbaff 240deg,#0fceff 246deg,#13e1ff 252deg,#18f3ff 258deg,#1cfff5 264deg,#1cffd7 270deg,#1cffb9 276deg,#1cff9d 282deg,#1cff82 288deg,#1cff68 294deg,#1dff4e 300deg,#24ff3a 306deg,#2aff26 312deg,#3aff1c 318deg,#51ff1d 324deg,#69ff1e 330deg,#81ff20 336deg,#98ff23 342deg,#b0ff2b 348deg,#c8ff33 354deg,#dfff3a 360deg)"></div>
<div class="bx" style="left:0;top:0;width:602px;height:463px;clip-path:polygon(137.7px 42.1px,406.5px 67.2px,179.4px 299.1px);background:conic-gradient(at 197.8px 101.9px,#e0ff40 0deg,#f3fd45 6deg,#f6f345 12deg,#f9e846 18deg,#fddd47 24deg,#ffd046 30deg,#ffc13f 36deg,#ffb138 42deg,#ff9e32 48deg,#ff8a2c 54deg,#ff7426 60deg,#ff5f21 66deg,#ff3d17 72deg,#ff190e 78deg,#ff0d1c 84deg,#ff0c36 90deg,#ff0b4c 96deg,#ff0b65 102deg,#ff0a80 108deg,#ff099b 114deg,#ff0bb6 120deg,#ff15d3 126deg,#ff1ef0 132deg,#f41fff 138deg,#dd17ff 144deg,#c60fff 150deg,#aa0bff 156deg,#8b07ff 162deg,#6c04ff 168deg,#5308ff 174deg,#3c0fff 180deg,#2616ff 186deg,#151fff 192deg,#102aff 198deg,#0b35ff 204deg,#0640ff 210deg,#075bff 216deg,#0875ff 222deg,#0a8fff 228deg,#0ca8ff 234deg,#0fbbff 240deg,#13ceff 246deg,#17e1ff 252deg,#1df3ff 258deg,#22fff5 264deg,#22ffd8 270deg,#22ffbb 276deg,#22ff9f 282deg,#22ff85 288deg,#22ff6b 294deg,#23ff52 300deg,#29ff3f 306deg,#30ff2b 312deg,#3fff22 318deg,#56ff23 324deg,#6dff24 330deg,#84ff26 336deg,#9bff29 342deg,#b2ff31 348deg,#c9ff39 354deg,#e0ff40 360deg)"></div>
<div class="bx" style="left:0;top:0;width:602px;height:463px;clip-path:polygon(139.6px 43.9px,400.1px 68.3px,179.9px 293.1px);background:conic-gradient(at 197.8px 101.9px,#e1ff46 0deg,#f3fd4a 6deg,#f6f34a 12deg,#fae94b 18deg,#fdde4c 24deg,#ffd24b 30deg,#ffc243 36deg,#ffb33c 42deg,#ffa036 48deg,#ff8c30 54deg,#ff772a 60deg,#ff6224 66deg,#ff401b 72deg,#ff1d12 78deg,#ff101f 84deg,#ff0f38 90deg,#ff0e4e 96deg,#ff0e67 102deg,#ff0d81 108deg,#ff0c9c 114deg,#ff0eb7 120deg,#ff17d4 126deg,#ff20f0 132deg,#f421ff 138deg,#dd19ff 144deg,#c711ff 150deg,#ab0cff 156deg,#8c09ff 162deg,#6d05ff 168deg,#5409ff 174deg,#3d10ff 180deg,#2717ff 186deg,#1720ff 192deg,#122bff 198deg,#0d37ff 204deg,#0842ff 210deg,#095cff 216deg,#0b76ff 222deg,#0d90ff 228deg,#0fa9ff 234deg,#13bcff 240deg,#17cfff 246deg,#1ce2ff 252deg,#22f4ff 258deg,#27fff6 264deg,#27ffd9 270deg,#27ffbd 276deg,#27ffa2 282deg,#27ff89 288deg,#27ff6f 294deg,#28ff57 300deg,#2fff44 306deg,#35ff31 312deg,#44ff28 318deg,#5bff29 324deg,#71ff2a 330deg,#88ff2c 336deg,#9eff2f 342deg,#b4ff37 348deg,#cbff3f 354deg,#e1ff46 360deg)"></div>
<div class="bx" style="left:0;top:0;width:602px;height:463px;clip-path:polygon(141.4px 45.7px,393.8px 69.3px,180.5px 287.1px);background:conic-gradient(at 197.8px 101.9px,#e2ff4c 0deg,#f4fd50 6deg,#f7f450 12deg,#fae950 18deg,#fddf51 24deg,#ffd34f 30deg,#ffc448 36deg,#ffb441 42deg,#ffa33a 48deg,#ff8e34 54deg,#ff7a2e 60deg,#ff6528 66deg,#ff431f 72deg,#ff2016 78deg,#ff1423 84deg,#ff133b 90deg,#ff1251 96deg,#ff1169 102deg,#ff1083 108deg,#ff0f9d 114deg,#ff11b8 120deg,#ff19d4 126deg,#ff22f1 132deg,#f423ff 138deg,#de1aff 144deg,#c712ff 150deg,#ab0dff 156deg,#8c0aff 162deg,#6e07ff 168deg,#550aff 174deg,#3e11ff 180deg,#2819ff 186deg,#1822ff 192deg,#132dff 198deg,#0f38ff 204deg,#0a44ff 210deg,#0c5eff 216deg,#0e78ff 222deg,#1092ff 228deg,#13aaff 234deg,#17bdff 240deg,#1cd0ff 246deg,#21e3ff 252deg,#28f4ff 258deg,#2dfff6 264deg,#2dffda 270deg,#2dffbf 276deg,#2dffa5 282deg,#2dff8c 288deg,#2dff73 294deg,#2eff5c 300deg,#34ff49 306deg,#3bff37 312deg,#49ff2e 318deg,#5fff2f 324deg,#75ff31 330deg,#8bff32 336deg,#a1ff36 342deg,#b7ff3d 348deg,#ccff45 354deg,#e2ff4c 360deg)"></div>
<div class="bx" style="left:0;top:0;width:602px;height:463px;clip-path:polygon(143.2px 47.5px,387.5px 70.4px,181.0px 281.2px);background:conic-gradient(at 197.8px 101.9px,#e3ff52 0deg,#f4fd55 6deg,#f7f455 12deg,#faea55 18deg,#fde056 24deg,#ffd454 30deg,#ffc54d 36deg,#ffb646 42deg,#ffa53f 48deg,#ff9139 54deg,#ff7c33 60deg,#ff682d 66deg,#ff4723 72deg,#ff241a 78deg,#ff1827 84deg,#ff163f 90deg,#ff1554 96deg,#ff156b 102deg,#ff1485 108deg,#ff129e 114deg,#ff14b9 120deg,#ff1cd5 126deg,#ff25f1 132deg,#f425ff 138deg,#de1cff 144deg,#c714ff 150deg,#ac0fff 156deg,#8d0cff 162deg,#6f08ff 168deg,#560cff 174deg,#4013ff 180deg,#2a1aff 186deg,#1a23ff 192deg,#152fff 198deg,#113aff 204deg,#0d46ff 210deg,#0f60ff 216deg,#117aff 222deg,#1493ff 228deg,#17acff 234deg,#1bbfff 240deg,#20d1ff 246deg,#27e3ff 252deg,#2ef4ff 258deg,#33fff6 264deg,#33ffdb 270deg,#33ffc1 276deg,#33ffa7 282deg,#33ff8f 288deg,#33ff77 294deg,#34ff60 300deg,#3aff4e 306deg,#40ff3c 312deg,#4eff34 318deg,#64ff35 324deg,#79ff37 330deg,#8fff38 336deg,#a4ff3c 342deg,#b9ff43 348deg,#ceff4b 354deg,#e3ff52 360deg)"></div>
<div class="bx" style="left:0;top:0;width:602px;height:463px;clip-path:polygon(145.0px 49.3px,381.2px 71.4px,181.6px 275.2px);background:conic-gradient(at 197.8px 101.9px,#e4ff58 0deg,#f4fd5b 6deg,#f7f45b 12deg,#faeb5b 18deg,#fde15b 24deg,#ffd559 30deg,#ffc752 36deg,#ffb84a 42deg,#ffa744 48deg,#ff933e 54deg,#ff7f37 60deg,#ff6b31 66deg,#ff4b28 72deg,#ff291e 78deg,#ff1c2b 84deg,#ff1b42 90deg,#ff1a57 96deg,#ff196e 102deg,#ff1887 108deg,#ff16a0 114deg,#ff17ba 120deg,#ff1fd5 126deg,#ff28f1 132deg,#f427ff 138deg,#de1fff 144deg,#c816ff 150deg,#ac11ff 156deg,#8e0eff 162deg,#700bff 168deg,#570eff 174deg,#4115ff 180deg,#2c1cff 186deg,#1c25ff 192deg,#1831ff 198deg,#143cff 204deg,#1048ff 210deg,#1262ff 216deg,#157cff 222deg,#1895ff 228deg,#1badff 234deg,#20c0ff 240deg,#26d2ff 246deg,#2ce4ff 252deg,#34f5ff 258deg,#3afff6 264deg,#3affdc 270deg,#3affc2 276deg,#3affaa 282deg,#3aff93 288deg,#3aff7b 294deg,#3bff65 300deg,#40ff54 306deg,#46ff42 312deg,#54ff3a 318deg,#69ff3c 324deg,#7eff3d 330deg,#92ff3f 336deg,#a7ff42 342deg,#bbff4a 348deg,#d0ff51 354deg,#e4ff58 360deg)"></div>
<div class="bx" style="left:0;top:0;width:602px;height:463px;clip-path:polygon(146.8px 51.1px,374.8px 72.5px,182.2px 269.2px);background:conic-gradient(at 197.8px 101.9px,#e5ff5e 0deg,#f5fe61 6deg,#f7f560 12deg,#faeb60 18deg,#fde260 24deg,#ffd65e 30deg,#ffc857 36deg,#ffba50 42deg,#ffa949 48deg,#ff9643 54deg,#ff833c 60deg,#ff6f36 66deg,#ff4f2c 72deg,#ff2d23 78deg,#ff212f 84deg,#ff1f46 90deg,#ff1e5a 96deg,#ff1d70 102deg,#ff1c89 108deg,#ff1aa2 114deg,#ff1bbb 120deg,#ff23d6 126deg,#ff2bf1 132deg,#f42aff 138deg,#df21ff 144deg,#c818ff 150deg,#ad13ff 156deg,#8f10ff 162deg,#710dff 168deg,#5910ff 174deg,#4317ff 180deg,#2e1eff 186deg,#1f28ff 192deg,#1b33ff 198deg,#173fff 204deg,#134bff 210deg,#1665ff 216deg,#197eff 222deg,#1c97ff 228deg,#20afff 234deg,#25c1ff 240deg,#2bd3ff 246deg,#32e5ff 252deg,#3af5ff 258deg,#40fff7 264deg,#40ffde 270deg,#40ffc4 276deg,#40ffad 282deg,#40ff96 288deg,#40ff80 294deg,#41ff6a 300deg,#47ff59 306deg,#4cff48 312deg,#59ff41 318deg,#6eff42 324deg,#82ff44 330deg,#96ff45 336deg,#aaff49 342deg,#beff50 348deg,#d1ff57 354deg,#e5ff5e 360deg)"></div>
<div class="bx" style="left:0;top:0;width:602px;height:463px;clip-path:polygon(148.7px 52.9px,368.5px 73.5px,182.7px 263.2px);background:conic-gradient(at 197.8px 101.9px,#e6ff64 0deg,#f5fe67 6deg,#f8f566 12deg,#faec65 18deg,#fde365 24deg,#ffd863 30deg,#ffca5c 36deg,#ffbc55 42deg,#ffac4e 48deg,#ff9948 54deg,#ff8642 60deg,#ff723b 66deg,#ff5332 72deg,#ff3228 78deg,#ff2634 84deg,#ff244a 90deg,#ff235d 96deg,#ff2273 102deg,#ff208b 108deg,#ff1ea3 114deg,#ff1fbc 120deg,#ff27d7 126deg,#ff2ef1 132deg,#f42dff 138deg,#df24ff 144deg,#c91bff 150deg,#ae16ff 156deg,#9013ff 162deg,#7310ff 168deg,#5b13ff 174deg,#451aff 180deg,#3021ff 186deg,#212aff 192deg,#1e36ff 198deg,#1a42ff 204deg,#174eff 210deg,#1a67ff 216deg,#1d80ff 222deg,#2199ff 228deg,#25b0ff 234deg,#2ac3ff 240deg,#31d5ff 246deg,#38e5ff 252deg,#40f5ff 258deg,#46fff7 264deg,#46ffdf 270deg,#46ffc6 276deg,#46ffaf 282deg,#46ff9a 288deg,#46ff84 294deg,#47ff6f 300deg,#4dff5f 306deg,#52ff4f 312deg,#5fff47 318deg,#73ff49 324deg,#86ff4a 330deg,#9aff4c 336deg,#adff4f 342deg,#c0ff56 348deg,#d3ff5d 354deg,#e6ff64 360deg)"></div>
<div class="bx" style="left:0;top:0;width:602px;height:463px;clip-path:polygon(150.5px 54.8px,362.2px 74.6px,183.3px 257.3px);background:conic-gradient(at 197.8px 101.9px,#e7ff6a 0deg,#f6fe6d 6deg,#f8f56c 12deg,#faed6b 18deg,#fde46b 24deg,#ffd968 30deg,#ffcc61 36deg,#ffbe5a 42deg,#ffae53 48deg,#ff9c4d 54deg,#ff8947 60deg,#ff7641 66deg,#ff5737 72deg,#ff372e 78deg,#ff2b39 84deg,#ff294e 90deg,#ff2861 96deg,#ff2676 102deg,#ff258e 108deg,#ff23a5 114deg,#ff24be 120deg,#ff2bd7 126deg,#ff32f2 132deg,#f531ff 138deg,#df27ff 144deg,#ca1eff 150deg,#af19ff 156deg,#9216ff 162deg,#7513ff 168deg,#5d16ff 174deg,#481dff 180deg,#3324ff 186deg,#252dff 192deg,#2139ff 198deg,#1e45ff 204deg,#1b51ff 210deg,#1e6aff 216deg,#2283ff 222deg,#259bff 228deg,#2ab2ff 234deg,#30c4ff 240deg,#36d6ff 246deg,#3ee6ff 252deg,#47f6ff 258deg,#4dfff7 264deg,#4dffe0 270deg,#4dffc8 276deg,#4dffb2 282deg,#4dff9d 288deg,#4dff88 294deg,#4eff74 300deg,#53ff65 306deg,#58ff55 312deg,#65ff4e 318deg,#78ff4f 324deg,#8bff51 330deg,#9dff53 336deg,#b0ff56 342deg,#c3ff5d 348deg,#d5ff63 354deg,#e7ff6a 360deg)"></div>
<div class="bx" style="left:0;top:0;width:602px;height:463px;clip-path:polygon(152.3px 56.6px,355.9px 75.6px,183.8px 251.3px);background:conic-gradient(at 197.8px 101.9px,#e8ff70 0deg,#f6fe72 6deg,#f8f671 12deg,#fbed71 18deg,#fde570 24deg,#ffda6e 30deg,#ffce67 36deg,#ffc060 42deg,#ffb159 48deg,#ff9f53 54deg,#ff8d4c 60deg,#ff7a46 66deg,#ff5c3d 72deg,#ff3d34 78deg,#ff313e 84deg,#ff2e52 90deg,#ff2d65 96deg,#ff2c7a 102deg,#ff2a91 108deg,#ff28a7 114deg,#ff28bf 120deg,#ff2fd8 126deg,#ff36f2 132deg,#f535ff 138deg,#e02bff 144deg,#cb21ff 150deg,#b01cff 156deg,#9419ff 162deg,#7716ff 168deg,#5f1aff 174deg,#4a20ff 180deg,#3627ff 186deg,#2831ff 192deg,#253cff 198deg,#2248ff 204deg,#1f54ff 210deg,#236dff 216deg,#2686ff 222deg,#2b9eff 228deg,#2fb4ff 234deg,#36c6ff 240deg,#3cd7ff 246deg,#44e7ff 252deg,#4df6ff 258deg,#54fff7 264deg,#54ffe1 270deg,#54ffca 276deg,#54ffb5 282deg,#54ffa1 288deg,#54ff8d 294deg,#54ff79 300deg,#59ff6a 306deg,#5fff5b 312deg,#6aff54 318deg,#7dff56 324deg,#8fff58 330deg,#a1ff59 336deg,#b3ff5d 342deg,#c5ff63 348deg,#d7ff6a 354deg,#e8ff70 360deg)"></div>
<div class="bx" style="left:0;top:0;width:602px;height:463px;clip-path:polygon(154.1px 58.4px,349.6px 76.7px,184.4px 245.3px);background:conic-gradient(at 197.8px 101.9px,#e9ff76 0deg,#f6fe78 6deg,#f9f677 12deg,#fbee76 18deg,#fde676 24deg,#ffdc73 30deg,#ffcf6c 36deg,#ffc365 42deg,#ffb45f 48deg,#ffa258 54deg,#ff9052 60deg,#ff7e4c 66deg,#ff6142 72deg,#ff4239 78deg,#ff3743 84deg,#ff3457 90deg,#ff3369 96deg,#ff317d 102deg,#ff3094 108deg,#ff2eaa 114deg,#ff2ec1 120deg,#ff34d9 126deg,#ff3af2 132deg,#f539ff 138deg,#e12fff 144deg,#cc25ff 150deg,#b220ff 156deg,#951dff 162deg,#791aff 168deg,#621dff 174deg,#4d24ff 180deg,#392bff 186deg,#2c34ff 192deg,#2940ff 198deg,#264cff 204deg,#2458ff 210deg,#2870ff 216deg,#2c89ff 222deg,#30a0ff 228deg,#35b6ff 234deg,#3cc8ff 240deg,#43d8ff 246deg,#4be8ff 252deg,#54f6ff 258deg,#5afff8 264deg,#5affe2 270deg,#5affcc 276deg,#5affb8 282deg,#5affa5 288deg,#5aff91 294deg,#5bff7f 300deg,#60ff70 306deg,#65ff62 312deg,#70ff5b 318deg,#82ff5d 324deg,#94ff5e 330deg,#a5ff60 336deg,#b6ff63 342deg,#c7ff6a 348deg,#d8ff70 354deg,#e9ff76 360deg)"></div>
<div class="bx" style="left:0;top:0;width:602px;height:463px;clip-path:polygon(156.0px 60.2px,343.2px 77.7px,185.0px 239.3px);background:conic-gradient(at 197.8px 101.9px,#eaff7c 0deg,#f7fe7e 6deg,#f9f67d 12deg,#fbef7c 18deg,#fde77b 24deg,#ffdd79 30deg,#ffd172 36deg,#ffc56b 42deg,#ffb664 48deg,#ffa65e 54deg,#ff9458 60deg,#ff8352 66deg,#ff6649 72deg,#ff4840 78deg,#ff3d49 84deg,#ff3a5c 90deg,#ff396e 96deg,#ff3781 102deg,#ff3697 108deg,#ff33ac 114deg,#ff33c2 120deg,#ff39da 126deg,#ff3ff3 132deg,#f53dff 138deg,#e133ff 144deg,#cd29ff 150deg,#b324ff 156deg,#9721ff 162deg,#7c1eff 168deg,#6522ff 174deg,#5128ff 180deg,#3d2fff 186deg,#3038ff 192deg,#2d44ff 198deg,#2b50ff 204deg,#295cff 210deg,#2d74ff 216deg,#318cff 222deg,#36a3ff 228deg,#3bb9ff 234deg,#42caff 240deg,#49daff 246deg,#51e9ff 252deg,#5bf7ff 258deg,#61fff8 264deg,#61ffe3 270deg,#61ffcf 276deg,#61ffbb 282deg,#61ffa8 288deg,#61ff96 294deg,#62ff84 300deg,#67ff76 306deg,#6bff68 312deg,#76ff62 318deg,#87ff64 324deg,#98ff65 330deg,#a9ff67 336deg,#b9ff6a 342deg,#caff70 348deg,#daff76 354deg,#eaff7c 360deg)"></div>
<div class="bx" style="left:0;top:0;width:602px;height:463px;clip-path:polygon(157.8px 62.0px,336.9px 78.8px,185.5px 233.4px);background:conic-gradient(at 197.8px 101.9px,#ebff83 0deg,#f7fe84 6deg,#f9f783 12deg,#fbef82 18deg,#fde881 24deg,#ffdf7e 30deg,#ffd378 36deg,#ffc771 42deg,#ffb96a 48deg,#ffa964 54deg,#ff985e 60deg,#ff8758 66deg,#ff6b4f 72deg,#ff4f46 78deg,#ff434f 84deg,#ff4061 90deg,#ff3f72 96deg,#ff3d85 102deg,#ff3c9a 108deg,#ff39ae 114deg,#ff39c4 120deg,#ff3edb 126deg,#ff44f3 132deg,#f642ff 138deg,#e238ff 144deg,#ce2eff 150deg,#b529ff 156deg,#9926ff 162deg,#7e23ff 168deg,#6826ff 174deg,#542cff 180deg,#4133ff 186deg,#353dff 192deg,#3249ff 198deg,#3054ff 204deg,#2f60ff 210deg,#3378ff 216deg,#378fff 222deg,#3ca6ff 228deg,#42bbff 234deg,#48cbff 240deg,#50dbff 246deg,#58eaff 252deg,#61f7ff 258deg,#68fff8 264deg,#68ffe5 270deg,#68ffd1 276deg,#68ffbe 282deg,#68ffac 288deg,#68ff9a 294deg,#69ff89 300deg,#6dff7c 306deg,#72ff6f 312deg,#7cff69 318deg,#8dff6a 324deg,#9dff6c 330deg,#adff6e 336deg,#bdff71 342deg,#ccff77 348deg,#dcff7d 354deg,#ebff83 360deg)"></div>
<div class="bx" style="left:0;top:0;width:602px;height:463px;clip-path:polygon(159.6px 63.8px,330.6px 79.8px,186.1px 227.4px);background:conic-gradient(at 197.8px 101.9px,#ecff89 0deg,#f7fe8a 6deg,#f9f789 12deg,#fbf088 18deg,#fee987 24deg,#ffe084 30deg,#ffd57d 36deg,#ffca77 42deg,#ffbc71 48deg,#ffac6b 54deg,#ff9c65 60deg,#ff8c5f 66deg,#ff7156 72deg,#ff554d 78deg,#ff4a55 84deg,#ff4767 90deg,#ff4577 96deg,#ff4489 102deg,#ff429d 108deg,#ff40b1 114deg,#ff3fc6 120deg,#ff44dc 126deg,#ff4af3 132deg,#f647ff 138deg,#e33dff 144deg,#cf33ff 150deg,#b62eff 156deg,#9c2bff 162deg,#8128ff 168deg,#6c2bff 174deg,#5831ff 180deg,#4538ff 186deg,#3a42ff 192deg,#384dff 198deg,#3659ff 204deg,#3564ff 210deg,#397cff 216deg,#3e93ff 222deg,#43a9ff 228deg,#48bdff 234deg,#4fcdff 240deg,#57dcff 246deg,#5feaff 252deg,#68f7ff 258deg,#6ffff9 264deg,#6fffe6 270deg,#6fffd3 276deg,#6fffc1 282deg,#6fffb0 288deg,#6fff9f 294deg,#70ff8f 300deg,#74ff82 306deg,#78ff75 312deg,#82ff70 318deg,#92ff71 324deg,#a2ff73 330deg,#b1ff75 336deg,#c0ff78 342deg,#cfff7e 348deg,#ddff83 354deg,#ecff89 360deg)"></div>
<div class="bx" style="left:0;top:0;width:602px;height:463px;clip-path:polygon(161.4px 65.6px,324.3px 80.9px,186.6px 221.4px);background:conic-gradient(at 197.8px 101.9px,#edff8f 0deg,#f8fe90 6deg,#faf88f 12deg,#fcf18d 18deg,#feea8c 24deg,#ffe18a 30deg,#ffd783 36deg,#ffcc7d 42deg,#ffbf77 48deg,#ffb071 54deg,#ffa06b 60deg,#ff9065 66deg,#ff775c 72deg,#ff5c54 78deg,#ff515c 84deg,#ff4e6c 90deg,#ff4c7c 96deg,#ff4b8d 102deg,#ff49a1 108deg,#ff46b4 114deg,#ff45c8 120deg,#ff4add 126deg,#ff4ff4 132deg,#f64dff 138deg,#e343ff 144deg,#d038ff 150deg,#b833ff 156deg,#9e30ff 162deg,#852eff 168deg,#6f31ff 174deg,#5d37ff 180deg,#4a3dff 186deg,#3f47ff 192deg,#3d52ff 198deg,#3c5eff 204deg,#3b69ff 210deg,#3f80ff 216deg,#4496ff 222deg,#49acff 228deg,#4fc0ff 234deg,#56cfff 240deg,#5edeff 246deg,#66ebff 252deg,#6ff8ff 258deg,#76fff9 264deg,#76ffe7 270deg,#76ffd5 276deg,#76ffc4 282deg,#76ffb4 288deg,#76ffa4 294deg,#77ff94 300deg,#7bff88 306deg,#7fff7c 312deg,#88ff77 318deg,#98ff78 324deg,#a6ff7a 330deg,#b5ff7c 336deg,#c3ff7f 342deg,#d1ff84 348deg,#dfff8a 354deg,#edff8f 360deg)"></div>
<div class="bx" style="left:0;top:0;width:602px;height:463px;clip-path:polygon(163.2px 67.4px,317.9px 81.9px,187.2px 215.4px);background:conic-gradient(at 197.8px 101.9px,#eeff95 0deg,#f8fe96 6deg,#faf895 12deg,#fcf293 18deg,#feeb92 24deg,#ffe390 30deg,#ffd98a 36deg,#ffce83 42deg,#ffc27d 48deg,#ffb478 54deg,#ffa572 60deg,#ff956c 66deg,#ff7d63 72deg,#ff635b 78deg,#ff5863 84deg,#ff5572 90deg,#ff5381 96deg,#ff5292 102deg,#ff50a4 108deg,#ff4db7 114deg,#ff4cca 120deg,#ff51de 126deg,#ff55f4 132deg,#f653ff 138deg,#e448ff 144deg,#d13eff 150deg,#ba39ff 156deg,#a136ff 162deg,#8834ff 168deg,#7437ff 174deg,#613cff 180deg,#4f43ff 186deg,#454cff 192deg,#4358ff 198deg,#4263ff 204deg,#426eff 210deg,#4685ff 216deg,#4b9aff 222deg,#50afff 228deg,#56c2ff 234deg,#5dd1ff 240deg,#65dfff 246deg,#6eecff 252deg,#77f8ff 258deg,#7dfff9 264deg,#7dffe8 270deg,#7dffd7 276deg,#7dffc7 282deg,#7dffb8 288deg,#7dffa8 294deg,#7eff9a 300deg,#82ff8e 306deg,#85ff83 312deg,#8fff7e 318deg,#9dff80 324deg,#abff81 330deg,#b9ff83 336deg,#c6ff86 342deg,#d4ff8b 348deg,#e1ff90 354deg,#eeff95 360deg)"></div>
<div class="bx" style="left:0;top:0;width:602px;height:463px;clip-path:polygon(165.1px 69.3px,311.6px 83.0px,187.8px 209.5px);background:conic-gradient(at 197.8px 101.9px,#efff9b 0deg,#f9fe9d 6deg,#faf89b 12deg,#fcf299 18deg,#feec98 24deg,#ffe496 30deg,#ffdb90 36deg,#ffd18a 42deg,#ffc584 48deg,#ffb77e 54deg,#ffa979 60deg,#ff9a73 66deg,#ff836b 72deg,#ff6a63 78deg,#ff5f6a 84deg,#ff5c79 90deg,#ff5b87 96deg,#ff5996 102deg,#ff58a8 108deg,#ff55ba 114deg,#ff53cc 120deg,#ff57e0 126deg,#ff5cf4 132deg,#f759ff 138deg,#e54fff 144deg,#d344ff 150deg,#bc3fff 156deg,#a43dff 162deg,#8c3aff 168deg,#783dff 174deg,#6643ff 180deg,#5549ff 186deg,#4b52ff 192deg,#4a5eff 198deg,#4969ff 204deg,#4974ff 210deg,#4e89ff 216deg,#529eff 222deg,#58b2ff 228deg,#5ec5ff 234deg,#65d3ff 240deg,#6de1ff 246deg,#75edff 252deg,#7ef8ff 258deg,#84fffa 264deg,#84ffea 270deg,#84ffd9 276deg,#84ffca 282deg,#84ffbc 288deg,#84ffad 294deg,#85ff9f 300deg,#89ff95 306deg,#8cff8a 312deg,#95ff85 318deg,#a2ff87 324deg,#b0ff88 330deg,#bdff8a 336deg,#c9ff8d 342deg,#d6ff92 348deg,#e3ff97 354deg,#efff9b 360deg)"></div>
<div class="bx" style="left:0;top:0;width:602px;height:463px;clip-path:polygon(166.9px 71.1px,305.3px 84.0px,188.3px 203.5px);background:conic-gradient(at 197.8px 101.9px,#f0ffa2 0deg,#f9fea3 6deg,#fbf9a1 12deg,#fcf39f 18deg,#feed9e 24deg,#ffe69c 30deg,#ffdd96 36deg,#ffd390 42deg,#ffc88b 48deg,#ffbb85 54deg,#ffae80 60deg,#ff9f7a 66deg,#ff8972 72deg,#ff716a 78deg,#ff6771 84deg,#ff647f 90deg,#ff638c 96deg,#ff619b 102deg,#ff5fac 108deg,#ff5cbd 114deg,#ff5bce 120deg,#ff5fe1 126deg,#ff63f5 132deg,#f760ff 138deg,#e655ff 144deg,#d54bff 150deg,#bf46ff 156deg,#a744ff 162deg,#9041ff 168deg,#7d44ff 174deg,#6c49ff 180deg,#5b4fff 186deg,#5259ff 192deg,#5164ff 198deg,#506fff 204deg,#5079ff 210deg,#558eff 216deg,#5aa3ff 222deg,#5fb6ff 228deg,#65c8ff 234deg,#6dd6ff 240deg,#74e2ff 246deg,#7deeff 252deg,#85f9ff 258deg,#8cfffa 264deg,#8cffeb 270deg,#8cffdc 276deg,#8cffcd 282deg,#8cffc0 288deg,#8cffb2 294deg,#8cffa5 300deg,#90ff9b 306deg,#93ff91 312deg,#9bff8c 318deg,#a8ff8e 324deg,#b5ff8f 330deg,#c1ff91 336deg,#cdff94 342deg,#d9ff98 348deg,#e4ff9d 354deg,#f0ffa2 360deg)"></div>
<div class="bx" style="left:0;top:0;width:602px;height:463px;clip-path:polygon(168.7px 72.9px,299.0px 85.1px,188.9px 197.5px);background:conic-gradient(at 197.8px 101.9px,#f1ffa8 0deg,#f9fea9 6deg,#fbf9a7 12deg,#fcf4a6 18deg,#feeea4 24deg,#ffe8a2 30deg,#ffdf9c 36deg,#ffd697 42deg,#ffcb91 48deg,#ffbf8c 54deg,#ffb287 60deg,#ffa581 66deg,#ff8f7a 72deg,#ff7972 78deg,#ff6f78 84deg,#ff6c86 90deg,#ff6b92 96deg,#ff69a0 102deg,#ff67b0 108deg,#ff64c0 114deg,#ff63d0 120deg,#ff66e2 126deg,#ff6af5 132deg,#f767ff 138deg,#e75dff 144deg,#d652ff 150deg,#c14dff 156deg,#ab4bff 162deg,#9449ff 168deg,#824bff 174deg,#7250ff 180deg,#6256ff 186deg,#595fff 192deg,#586aff 198deg,#5875ff 204deg,#587fff 210deg,#5d94ff 216deg,#62a7ff 222deg,#67baff 228deg,#6dcbff 234deg,#74d8ff 240deg,#7ce4ff 246deg,#84efff 252deg,#8df9ff 258deg,#93fffa 264deg,#93ffec 270deg,#93ffde 276deg,#93ffd0 282deg,#93ffc4 288deg,#93ffb7 294deg,#93ffab 300deg,#97ffa1 306deg,#9aff98 312deg,#a2ff94 318deg,#aeff95 324deg,#b9ff97 330deg,#c5ff98 336deg,#d0ff9b 342deg,#dbff9f 348deg,#e6ffa4 354deg,#f1ffa8 360deg)"></div>
<div class="bx" style="left:0;top:0;width:602px;height:463px;clip-path:polygon(170.5px 74.7px,292.7px 86.1px,189.4px 191.5px);background:conic-gradient(at 197.8px 101.9px,#f2ffae 0deg,#fafeaf 6deg,#fbfaad 12deg,#fcf5ac 18deg,#feefaa 24deg,#ffe9a8 30deg,#ffe1a3 36deg,#ffd99e 42deg,#ffcf98 48deg,#ffc393 54deg,#ffb78e 60deg,#ffaa89 66deg,#ff9682 72deg,#ff807a 78deg,#ff7780 84deg,#ff748c 90deg,#ff7398 96deg,#ff71a6 102deg,#ff70b5 108deg,#ff6dc3 114deg,#ff6bd3 120deg,#ff6ee4 126deg,#ff71f6 132deg,#f86eff 138deg,#e864ff 144deg,#d85aff 150deg,#c455ff 156deg,#af53ff 162deg,#9951ff 168deg,#8753ff 174deg,#7858ff 180deg,#695eff 186deg,#6067ff 192deg,#6071ff 198deg,#607cff 204deg,#6086ff 210deg,#6599ff 216deg,#6aacff 222deg,#70bdff 228deg,#76ceff 234deg,#7ddaff 240deg,#84e6ff 246deg,#8cf0ff 252deg,#94faff 258deg,#9afffb 264deg,#9affed 270deg,#9affe0 276deg,#9affd4 282deg,#9affc8 288deg,#9affbc 294deg,#9bffb1 300deg,#9effa8 306deg,#a1ff9f 312deg,#a8ff9b 318deg,#b3ff9c 324deg,#beff9e 330deg,#c9ff9f 336deg,#d3ffa2 342deg,#deffa6 348deg,#e8ffaa 354deg,#f2ffae 360deg)"></div>
<div class="bx" style="left:0;top:0;width:602px;height:463px;clip-path:polygon(172.3px 76.5px,286.3px 87.2px,190.0px 185.6px);background:conic-gradient(at 197.8px 101.9px,#f3ffb4 0deg,#fafeb5 6deg,#fbfab3 12deg,#fdf5b2 18deg,#fef0b1 24deg,#ffebae 30deg,#ffe3a9 36deg,#ffdba4 42deg,#ffd29f 48deg,#ffc79b 54deg,#ffbc96 60deg,#ffb091 66deg,#ff9d8a 72deg,#ff8883 78deg,#ff8088 84deg,#ff7d93 90deg,#ff7b9e 96deg,#ff7aab 102deg,#ff78b9 108deg,#ff75c7 114deg,#ff74d5 120deg,#ff76e5 126deg,#ff79f6 132deg,#f876ff 138deg,#ea6cff 144deg,#da62ff 150deg,#c75eff 156deg,#b25bff 162deg,#9e59ff 168deg,#8d5cff 174deg,#7e60ff 180deg,#7066ff 186deg,#686eff 192deg,#6879ff 198deg,#6983ff 204deg,#698cff 210deg,#6e9fff 216deg,#73b1ff 222deg,#78c1ff 228deg,#7ed1ff 234deg,#85ddff 240deg,#8ce7ff 246deg,#94f1ff 252deg,#9cfaff 258deg,#a2fffb 264deg,#a2ffef 270deg,#a2ffe2 276deg,#a2ffd7 282deg,#a2ffcc 288deg,#a2ffc1 294deg,#a2ffb6 300deg,#a5ffae 306deg,#a8ffa6 312deg,#aeffa2 318deg,#b9ffa4 324deg,#c3ffa5 330deg,#cdffa7 336deg,#d7ffa9 342deg,#e0ffad 348deg,#eaffb1 354deg,#f3ffb4 360deg)"></div>
<div class="bx" style="left:0;top:0;width:602px;height:463px;clip-path:polygon(174.2px 78.3px,280.0px 88.2px,190.6px 179.6px);background:conic-gradient(at 197.8px 101.9px,#f4ffbb 0deg,#fbfebb 6deg,#fcfaba 12deg,#fdf6b8 18deg,#fef2b7 24deg,#ffecb5 30deg,#ffe5b0 36deg,#ffdeab 42deg,#ffd5a7 48deg,#ffcba2 54deg,#ffc19d 60deg,#ffb599 66deg,#ffa492 72deg,#ff918b 78deg,#ff8990 84deg,#ff869b 90deg,#ff84a5 96deg,#ff83b1 102deg,#ff81be 108deg,#ff7eca 114deg,#ff7cd8 120deg,#ff7fe7 126deg,#ff81f7 132deg,#f97eff 138deg,#eb75ff 144deg,#dc6bff 150deg,#ca66ff 156deg,#b764ff 162deg,#a362ff 168deg,#9365ff 174deg,#8569ff 180deg,#786eff 186deg,#7177ff 192deg,#7180ff 198deg,#718aff 204deg,#7293ff 210deg,#77a5ff 216deg,#7cb6ff 222deg,#81c5ff 228deg,#87d4ff 234deg,#8edfff 240deg,#95e9ff 246deg,#9cf2ff 252deg,#a4faff 258deg,#a9fffb 264deg,#a9fff0 270deg,#a9ffe5 276deg,#a9ffda 282deg,#a9ffd0 288deg,#a9ffc6 294deg,#aaffbc 300deg,#acffb5 306deg,#afffad 312deg,#b5ffaa 318deg,#bfffab 324deg,#c8ffac 330deg,#d1ffae 336deg,#daffb0 342deg,#e3ffb4 348deg,#ecffb7 354deg,#f4ffbb 360deg)"></div>
<div class="bx" style="left:0;top:0;width:602px;height:463px;clip-path:polygon(176.0px 80.1px,273.7px 89.3px,191.1px 173.6px);background:conic-gradient(at 197.8px 101.9px,#f5ffc1 0deg,#fbfec1 6deg,#fcfbc0 12deg,#fdf7be 18deg,#fef3bd 24deg,#ffeebb 30deg,#ffe8b7 36deg,#ffe1b2 42deg,#ffd9ae 48deg,#ffcfa9 54deg,#ffc6a5 60deg,#ffbba1 66deg,#ffab9a 72deg,#ff9994 78deg,#ff9198 84deg,#ff8fa2 90deg,#ff8dac 96deg,#ff8cb6 102deg,#ff8ac2 108deg,#ff87ce 114deg,#ff86db 120deg,#ff88e9 126deg,#ff8af7 132deg,#f987ff 138deg,#ec7dff 144deg,#de74ff 150deg,#cd70ff 156deg,#bb6eff 162deg,#a96cff 168deg,#9a6eff 174deg,#8d72ff 180deg,#8077ff 186deg,#7a7fff 192deg,#7a89ff 198deg,#7b92ff 204deg,#7c9bff 210deg,#80abff 216deg,#85bbff 222deg,#8acaff 228deg,#90d7ff 234deg,#96e1ff 240deg,#9debff 246deg,#a4f3ff 252deg,#acfbff 258deg,#b1fffc 264deg,#b1fff1 270deg,#b1ffe7 276deg,#b1ffdd 282deg,#b1ffd4 288deg,#b1ffcb 294deg,#b1ffc2 300deg,#b4ffbb 306deg,#b6ffb4 312deg,#bbffb1 318deg,#c4ffb3 324deg,#cdffb4 330deg,#d5ffb5 336deg,#ddffb7 342deg,#e5ffba 348deg,#edffbe 354deg,#f5ffc1 360deg)"></div>
<div class="bx" style="left:0;top:0;width:602px;height:463px;clip-path:polygon(177.8px 82.0px,267.4px 90.3px,191.7px 167.6px);background:conic-gradient(at 197.8px 101.9px,#f6ffc7 0deg,#fbfec8 6deg,#fcfbc6 12deg,#fdf8c5 18deg,#fef4c4 24deg,#ffefc1 30deg,#ffeabd 36deg,#ffe4b9 42deg,#ffdcb5 48deg,#ffd4b1 54deg,#ffcbad 60deg,#ffc1a9 66deg,#ffb2a3 72deg,#ffa29d 78deg,#ff9ba1 84deg,#ff98aa 90deg,#ff97b2 96deg,#ff95bc 102deg,#ff94c7 108deg,#ff91d2 114deg,#ff8fde 120deg,#ff91ea 126deg,#ff93f8 132deg,#f990ff 138deg,#ed87ff 144deg,#e07eff 150deg,#d17aff 156deg,#c078ff 162deg,#af76ff 168deg,#a178ff 174deg,#957cff 180deg,#8980ff 186deg,#8388ff 192deg,#8491ff 198deg,#859aff 204deg,#86a2ff 210deg,#8ab2ff 216deg,#8fc0ff 222deg,#94ceff 228deg,#99daff 234deg,#9fe4ff 240deg,#a6edff 246deg,#adf4ff 252deg,#b4fbff 258deg,#b8fffc 264deg,#b8fff3 270deg,#b8ffe9 276deg,#b8ffe1 282deg,#b8ffd8 288deg,#b8ffd0 294deg,#b9ffc8 300deg,#bbffc2 306deg,#bdffbc 312deg,#c2ffb9 318deg,#caffba 324deg,#d2ffbb 330deg,#d9ffbc 336deg,#e1ffbe 342deg,#e8ffc1 348deg,#efffc4 354deg,#f6ffc7 360deg)"></div>
<div class="bx" style="left:0;top:0;width:602px;height:463px;clip-path:polygon(179.6px 83.8px,261.0px 91.4px,192.2px 161.7px);background:conic-gradient(at 197.8px 101.9px,#f7ffce 0deg,#fcffce 6deg,#fdfccc 12deg,#fdf9cb 18deg,#fef5ca 24deg,#fff1c8 30deg,#ffecc4 36deg,#ffe6c1 42deg,#ffe0bd 48deg,#ffd8b9 54deg,#ffd0b5 60deg,#ffc7b1 66deg,#ffb9ac 72deg,#ffaba7 78deg,#ffa4aa 84deg,#ffa2b2 90deg,#ffa0ba 96deg,#ff9fc2 102deg,#ff9dcc 108deg,#ff9bd6 114deg,#ff99e1 120deg,#ff9aec 126deg,#ff9cf9 132deg,#fa99ff 138deg,#ef91ff 144deg,#e388ff 150deg,#d484ff 156deg,#c583ff 162deg,#b581ff 168deg,#a983ff 174deg,#9d86ff 180deg,#928aff 186deg,#8d92ff 192deg,#8e9aff 198deg,#8fa2ff 204deg,#90aaff 210deg,#94b8ff 216deg,#99c6ff 222deg,#9ed2ff 228deg,#a3deff 234deg,#a9e7ff 240deg,#afeeff 246deg,#b5f5ff 252deg,#bcfcff 258deg,#c0fffc 264deg,#c0fff4 270deg,#c0ffec 276deg,#c0ffe4 282deg,#c0ffdc 288deg,#c0ffd5 294deg,#c0ffce 300deg,#c2ffc8 306deg,#c4ffc3 312deg,#c9ffc1 318deg,#d0ffc2 324deg,#d7ffc3 330deg,#deffc4 336deg,#e4ffc5 342deg,#ebffc8 348deg,#f1ffcb 354deg,#f7ffce 360deg)"></div>
<div class="bx" style="left:0;top:0;width:602px;height:463px;clip-path:polygon(181.4px 85.6px,254.7px 92.4px,192.8px 155.7px);background:conic-gradient(at 197.8px 101.9px,#f8ffd4 0deg,#fcffd4 6deg,#fdfcd3 12deg,#fef9d2 18deg,#fef6d0 24deg,#fff3cf 30deg,#ffeecb 36deg,#ffe9c8 42deg,#ffe3c4 48deg,#ffdcc1 54deg,#ffd5bd 60deg,#ffcdba 66deg,#ffc1b5 72deg,#ffb4b0 78deg,#ffaeb3 84deg,#ffabba 90deg,#ffaac1 96deg,#ffa9c9 102deg,#ffa8d2 108deg,#ffa5da 114deg,#ffa3e4 120deg,#ffa4ee 126deg,#ffa6f9 132deg,#faa3ff 138deg,#f09bff 144deg,#e593ff 150deg,#d88fff 156deg,#ca8eff 162deg,#bc8cff 168deg,#b08eff 174deg,#a691ff 180deg,#9c95ff 186deg,#989cff 192deg,#99a4ff 198deg,#9aabff 204deg,#9bb2ff 210deg,#9fbfff 216deg,#a3ccff 222deg,#a8d7ff 228deg,#ace1ff 234deg,#b2e9ff 240deg,#b8f0ff 246deg,#bef7ff 252deg,#c4fcff 258deg,#c8fffd 264deg,#c8fff5 270deg,#c8ffee 276deg,#c8ffe7 282deg,#c8ffe1 288deg,#c8ffda 294deg,#c8ffd4 300deg,#caffcf 306deg,#cbffca 312deg,#cfffc8 318deg,#d6ffc9 324deg,#dcffca 330deg,#e2ffcb 336deg,#e7ffcd 342deg,#edffcf 348deg,#f3ffd2 354deg,#f8ffd4 360deg)"></div>
<div class="bx" style="left:0;top:0;width:602px;height:463px;clip-path:polygon(183.3px 87.4px,248.4px 93.5px,193.4px 149.7px);background:conic-gradient(at 197.8px 101.9px,#f9ffda 0deg,#fdffda 6deg,#fdfdd9 12deg,#fefad8 18deg,#fff8d7 24deg,#fff4d5 30deg,#fff0d2 36deg,#ffeccf 42deg,#ffe7cc 48deg,#ffe1c9 54deg,#ffdac6 60deg,#ffd4c3 66deg,#ffc9be 72deg,#ffbdba 78deg,#ffb8bc 84deg,#ffb6c2 90deg,#ffb4c8 96deg,#ffb3cf 102deg,#ffb2d7 108deg,#ffb0df 114deg,#ffaee7 120deg,#ffaff0 126deg,#ffb0fa 132deg,#fbadff 138deg,#f2a6ff 144deg,#e89eff 150deg,#dc9bff 156deg,#d09aff 162deg,#c398ff 168deg,#b99aff 174deg,#af9dff 180deg,#a7a0ff 186deg,#a3a6ff 192deg,#a4aeff 198deg,#a5b4ff 204deg,#a6bbff 210deg,#aac7ff 216deg,#aed2ff 222deg,#b2dcff 228deg,#b6e5ff 234deg,#bcecff 240deg,#c1f2ff 246deg,#c6f8ff 252deg,#ccfcff 258deg,#d0fffd 264deg,#d0fff7 270deg,#d0fff0 276deg,#d0ffeb 282deg,#d0ffe5 288deg,#d0ffdf 294deg,#d0ffda 300deg,#d1ffd6 306deg,#d3ffd2 312deg,#d6ffd0 318deg,#dcffd1 324deg,#e1ffd2 330deg,#e6ffd3 336deg,#ebffd4 342deg,#f0ffd6 348deg,#f5ffd8 354deg,#f9ffda 360deg)"></div>
<div class="bx" style="left:0;top:0;width:602px;height:463px;clip-path:polygon(185.1px 89.2px,242.1px 94.5px,193.9px 143.7px);background:conic-gradient(at 197.8px 101.9px,#faffe1 0deg,#fdffe1 6deg,#fdfde0 12deg,#fefbde 18deg,#fff9dd 24deg,#fff6dc 30deg,#fff3d9 36deg,#ffefd7 42deg,#ffebd4 48deg,#ffe5d1 54deg,#ffe0ce 60deg,#ffdacc 66deg,#ffd1c8 72deg,#ffc7c4 78deg,#ffc2c6 84deg,#ffc0cb 90deg,#ffbfd0 96deg,#ffbed6 102deg,#ffbddd 108deg,#ffbae3 114deg,#ffb9ea 120deg,#ffb9f2 126deg,#ffbafb 132deg,#fbb8ff 138deg,#f4b1ff 144deg,#ebaaff 150deg,#e1a7ff 156deg,#d5a6ff 162deg,#caa5ff 168deg,#c1a6ff 174deg,#b9a9ff 180deg,#b1acff 186deg,#aeb1ff 192deg,#afb8ff 198deg,#b0beff 204deg,#b2c4ff 210deg,#b5ceff 216deg,#b9d8ff 222deg,#bde1ff 228deg,#c1e9ff 234deg,#c5efff 240deg,#caf4ff 246deg,#cff9ff 252deg,#d4fdff 258deg,#d7fffd 264deg,#d7fff8 270deg,#d7fff3 276deg,#d7ffee 282deg,#d7ffe9 288deg,#d7ffe5 294deg,#d8ffe0 300deg,#d9ffdd 306deg,#daffd9 312deg,#ddffd8 318deg,#e1ffd9 324deg,#e6ffd9 330deg,#eaffda 336deg,#eeffdb 342deg,#f2ffdd 348deg,#f6ffdf 354deg,#faffe1 360deg)"></div>
<div class="bx" style="left:0;top:0;width:602px;height:463px;clip-path:polygon(186.9px 91.0px,235.8px 95.6px,194.5px 137.7px);background:conic-gradient(at 197.8px 101.9px,#fbffe7 0deg,#fdffe7 6deg,#fefde6 12deg,#fefce5 18deg,#fffae4 24deg,#fff8e3 30deg,#fff5e0 36deg,#fff2de 42deg,#ffeedc 48deg,#ffead9 54deg,#ffe5d7 60deg,#ffe1d5 66deg,#ffd9d1 72deg,#ffd0ce 78deg,#ffcccf 84deg,#ffcad4 90deg,#ffc9d8 96deg,#ffc9dd 102deg,#ffc8e2 108deg,#ffc6e8 114deg,#ffc4ed 120deg,#ffc5f4 126deg,#ffc5fb 132deg,#fcc3ff 138deg,#f5bdff 144deg,#eeb7ff 150deg,#e5b4ff 156deg,#dcb3ff 162deg,#d2b2ff 168deg,#cab3ff 174deg,#c3b5ff 180deg,#bdb8ff 186deg,#babdff 192deg,#bbc3ff 198deg,#bcc8ff 204deg,#becdff 210deg,#c1d6ff 216deg,#c4deff 222deg,#c8e6ff 228deg,#cbecff 234deg,#cff2ff 240deg,#d4f6ff 246deg,#d8faff 252deg,#dcfdff 258deg,#dffffe 264deg,#dffff9 270deg,#dffff5 276deg,#dffff1 282deg,#dfffee 288deg,#dfffea 294deg,#dfffe6 300deg,#e0ffe3 306deg,#e1ffe1 312deg,#e4ffe0 318deg,#e7ffe0 324deg,#ebffe1 330deg,#eeffe2 336deg,#f2ffe3 342deg,#f5ffe4 348deg,#f8ffe6 354deg,#fbffe7 360deg)"></div>
<div class="bx" style="left:0;top:0;width:602px;height:463px;clip-path:polygon(188.7px 92.8px,229.4px 96.6px,195.0px 131.8px);background:conic-gradient(at 197.8px 101.9px,#fcffee 0deg,#feffed 6deg,#fefeec 12deg,#fefdeb 18deg,#fffbeb 24deg,#fffae9 30deg,#fff7e8 36deg,#fff5e6 42deg,#fff2e4 48deg,#ffefe2 54deg,#ffebe0 60deg,#ffe7de 66deg,#ffe1db 72deg,#ffdad8 78deg,#ffd7d9 84deg,#ffd5dd 90deg,#ffd4e0 96deg,#ffd4e4 102deg,#ffd3e8 108deg,#ffd1ec 114deg,#ffd0f1 120deg,#ffd0f6 126deg,#ffd0fc 132deg,#fdceff 138deg,#f7c9ff 144deg,#f1c4ff 150deg,#eac2ff 156deg,#e2c1ff 162deg,#dac0ff 168deg,#d4c1ff 174deg,#cec3ff 180deg,#c9c5ff 186deg,#c7c9ff 192deg,#c8ceff 198deg,#c9d2ff 204deg,#cad7ff 210deg,#cddeff 216deg,#d0e5ff 222deg,#d3ebff 228deg,#d6f0ff 234deg,#d9f4ff 240deg,#ddf8ff 246deg,#e1fbff 252deg,#e5feff 258deg,#e7fffe 264deg,#e7fffb 270deg,#e7fff8 276deg,#e7fff5 282deg,#e7fff2 288deg,#e7ffef 294deg,#e7ffec 300deg,#e8ffea 306deg,#e9ffe8 312deg,#eaffe7 318deg,#edffe8 324deg,#f0ffe9 330deg,#f3ffe9 336deg,#f5ffea 342deg,#f8ffeb 348deg,#faffec 354deg,#fcffee 360deg)"></div>
<div class="bx" style="left:0;top:0;width:602px;height:463px;clip-path:polygon(190.5px 94.6px,223.1px 97.7px,195.6px 125.8px);background:conic-gradient(at 197.8px 101.9px,#fdfff4 0deg,#fefff4 6deg,#fefef3 12deg,#fffdf2 18deg,#fffcf1 24deg,#fffbf0 30deg,#fffaef 36deg,#fff8ed 42deg,#fff6ec 48deg,#fff4ea 54deg,#fff1e9 60deg,#ffeee7 66deg,#ffe9e5 72deg,#ffe4e3 78deg,#ffe2e4 84deg,#ffe0e6 90deg,#ffe0e8 96deg,#ffdfeb 102deg,#ffdeee 108deg,#ffddf1 114deg,#ffdcf4 120deg,#ffdcf8 126deg,#ffdcfd 132deg,#fddaff 138deg,#f9d6ff 144deg,#f4d2ff 150deg,#efd0ff 156deg,#e9cfff 162deg,#e3ceff 168deg,#decfff 174deg,#d9d1ff 180deg,#d5d2ff 186deg,#d4d6ff 192deg,#d5d9ff 198deg,#d6ddff 204deg,#d7e1ff 210deg,#dae6ff 216deg,#dcebff 222deg,#def0ff 228deg,#e1f4ff 234deg,#e4f7ff 240deg,#e7faff 246deg,#eafcff 252deg,#edfeff 258deg,#effffe 264deg,#effffc 270deg,#effffa 276deg,#effff8 282deg,#effff6 288deg,#effff4 294deg,#effff3 300deg,#f0fff1 306deg,#f0fff0 312deg,#f1ffef 318deg,#f3fff0 324deg,#f5fff0 330deg,#f7fff1 336deg,#f9fff1 342deg,#fafff2 348deg,#fcfff3 354deg,#fdfff4 360deg)"></div>
<div class="bx" style="left:0;top:0;width:602px;height:463px;clip-path:polygon(192.4px 96.5px,216.8px 98.7px,196.2px 119.8px);background:conic-gradient(at 197.8px 101.9px,#fefffa 0deg,#fffffa 6deg,#fffff9 12deg,#fffef9 18deg,#fffef8 24deg,#fffdf7 30deg,#fffcf6 36deg,#fffbf5 42deg,#fffaf4 48deg,#fff8f3 54deg,#fff7f2 60deg,#fff5f1 66deg,#fff2ef 72deg,#ffefee 78deg,#ffedee 84deg,#ffecef 90deg,#ffebf0 96deg,#ffebf2 102deg,#ffeaf4 108deg,#ffe9f6 114deg,#ffe8f8 120deg,#ffe8fb 126deg,#ffe8fd 132deg,#fee6ff 138deg,#fbe3ff 144deg,#f8e0ff 150deg,#f4dfff 156deg,#f0deff 162deg,#ebdeff 168deg,#e8deff 174deg,#e5dfff 180deg,#e2e0ff 186deg,#e2e3ff 192deg,#e3e6ff 198deg,#e3e8ff 204deg,#e5ebff 210deg,#e6efff 216deg,#e8f2ff 222deg,#eaf5ff 228deg,#ecf8ff 234deg,#eefaff 240deg,#f1fcff 246deg,#f3fdff 252deg,#f5ffff 258deg,#f7ffff 264deg,#f7fffe 270deg,#f7fffd 276deg,#f7fffc 282deg,#f7fffb 288deg,#f7fffa 294deg,#f7fff9 300deg,#f7fff8 306deg,#f8fff7 312deg,#f8fff7 318deg,#f9fff8 324deg,#fafff8 330deg,#fbfff8 336deg,#fcfff9 342deg,#fdfff9 348deg,#fefffa 354deg,#fefffa 360deg)"></div>
<div class="bx" style="left:0;top:0;width:602px;height:463px;clip-path:polygon(194.2px 98.3px,210.5px 99.8px,196.7px 113.8px);background:conic-gradient(at 197.8px 101.9px,#ffffff 0deg,#ffffff 6deg,#ffffff 12deg,#ffffff 18deg,#ffffff 24deg,#fffffe 30deg,#fffffe 36deg,#fffefd 42deg,#fffefc 48deg,#fffdfc 54deg,#fffdfb 60deg,#fffcfa 66deg,#fffafa 72deg,#fff9f9 78deg,#fff8f8 84deg,#fff7f9 90deg,#fff7f9 96deg,#fff7fa 102deg,#fff6fa 108deg,#fff5fb 114deg,#fff5fc 120deg,#fff4fd 126deg,#fff4fe 132deg,#fef3ff 138deg,#fdf1ff 144deg,#fbefff 150deg,#f9eeff 156deg,#f7eeff 162deg,#f5edff 168deg,#f3eeff 174deg,#f1eeff 180deg,#f0efff 186deg,#f0f1ff 192deg,#f1f2ff 198deg,#f1f4ff 204deg,#f2f5ff 210deg,#f4f7ff 216deg,#f5f9ff 222deg,#f6fbff 228deg,#f8fcff 234deg,#f9fdff 240deg,#fbfeff 246deg,#fcffff 252deg,#feffff 258deg,#ffffff 264deg,#ffffff 270deg,#ffffff 276deg,#ffffff 282deg,#ffffff 288deg,#ffffff 294deg,#ffffff 300deg,#ffffff 306deg,#ffffff 312deg,#ffffff 318deg,#ffffff 324deg,#ffffff 330deg,#ffffff 336deg,#ffffff 342deg,#ffffff 348deg,#ffffff 354deg,#ffffff 360deg)"></div>
<div class="bx" style="left:0;top:0;width:602px;height:463px;clip-path:polygon(196.0px 100.1px,204.2px 100.8px,197.3px 107.9px);background:conic-gradient(at 197.8px 101.9px,#ffffff 0deg,#ffffff 6deg,#ffffff 12deg,#ffffff 18deg,#ffffff 24deg,#ffffff 30deg,#ffffff 36deg,#ffffff 42deg,#ffffff 48deg,#ffffff 54deg,#ffffff 60deg,#ffffff 66deg,#ffffff 72deg,#ffffff 78deg,#ffffff 84deg,#ffffff 90deg,#ffffff 96deg,#ffffff 102deg,#ffffff 108deg,#ffffff 114deg,#ffffff 120deg,#ffffff 126deg,#ffffff 132deg,#ffffff 138deg,#ffffff 144deg,#fffeff 150deg,#fffeff 156deg,#fffeff 162deg,#fefeff 168deg,#fefeff 174deg,#fefeff 180deg,#fefeff 186deg,#ffffff 192deg,#ffffff 198deg,#ffffff 204deg,#ffffff 210deg,#ffffff 216deg,#ffffff 222deg,#ffffff 228deg,#ffffff 234deg,#ffffff 240deg,#ffffff 246deg,#ffffff 252deg,#ffffff 258deg,#ffffff 264deg,#ffffff 270deg,#ffffff 276deg,#ffffff 282deg,#ffffff 288deg,#ffffff 294deg,#ffffff 300deg,#ffffff 306deg,#ffffff 312deg,#ffffff 318deg,#ffffff 324deg,#ffffff 330deg,#ffffff 336deg,#ffffff 342deg,#ffffff 348deg,#ffffff 354deg,#ffffff 360deg)"></div>
<div class="bx" style="left:408px;top:299.5px;width:187px;height:123px;border:1.3px solid #a0a0a0;background:linear-gradient(145deg,#ffa028 0%,#ff7a2a 33%,#ff5c2c 66%,#ff3a22 100%)"></div>
<svg class="bx" style="left:0;top:0" width="602" height="463"><rect x="118.5" y="22.5" width="12" height="12" fill="none" stroke="#f4f4f4" stroke-width="1.8"/><rect x="141.7" y="45.5" width="12" height="12" fill="none" stroke="#f4f4f4" stroke-width="1.8"/><rect x="178.4" y="37.4" width="12" height="12" fill="none" stroke="#f4f4f4" stroke-width="1.8"/><rect x="197.9" y="28.9" width="12" height="12" fill="none" stroke="#f4f4f4" stroke-width="1.8"/><rect x="223.0" y="33.3" width="12" height="12" fill="none" stroke="#f4f4f4" stroke-width="1.8"/><rect x="175.8" y="57.4" width="12" height="12" fill="none" stroke="#f4f4f4" stroke-width="1.8"/><rect x="148.2" y="87.2" width="12" height="12" fill="none" stroke="#f4f4f4" stroke-width="1.8"/><rect x="133.1" y="105.4" width="12" height="12" fill="none" stroke="#f4f4f4" stroke-width="1.8"/><rect x="138.0" y="134.2" width="12" height="12" fill="none" stroke="#f4f4f4" stroke-width="1.8"/><rect x="170.0" y="131.3" width="12" height="12" fill="none" stroke="#f4f4f4" stroke-width="1.8"/><rect x="189.0" y="136.6" width="12" height="12" fill="none" stroke="#f4f4f4" stroke-width="1.8"/><rect x="221.7" y="153.3" width="12" height="12" fill="none" stroke="#f4f4f4" stroke-width="1.8"/><rect x="171.9" y="181.5" width="12" height="12" fill="none" stroke="#f4f4f4" stroke-width="1.8"/><rect x="171.9" y="228.5" width="12" height="12" fill="none" stroke="#f4f4f4" stroke-width="1.8"/><rect x="170.0" y="333.6" width="12" height="12" fill="none" stroke="#f4f4f4" stroke-width="1.8"/><rect x="298.8" y="200.5" width="12" height="12" fill="none" stroke="#f4f4f4" stroke-width="1.8"/><rect x="253.1" y="39.3" width="12" height="12" fill="none" stroke="#f4f4f4" stroke-width="1.8"/><rect x="292.8" y="43.2" width="12" height="12" fill="none" stroke="#f4f4f4" stroke-width="1.8"/><rect x="292.8" y="48.5" width="12" height="12" fill="none" stroke="#f4f4f4" stroke-width="1.8"/><rect x="443.9" y="52.0" width="12" height="12" fill="none" stroke="#f4f4f4" stroke-width="1.8"/><rect x="369.0" y="71.1" width="12" height="12" fill="none" stroke="#f4f4f4" stroke-width="1.8"/><rect x="310.9" y="83.1" width="12" height="12" fill="none" stroke="#f4f4f4" stroke-width="1.8"/><rect x="281.0" y="126.2" width="12" height="12" fill="none" stroke="#f4f4f4" stroke-width="1.8"/><rect x="267.0" y="51.1" width="12" height="12" fill="none" stroke="#f4f4f4" stroke-width="1.8"/><rect x="277.0" y="57.0" width="12" height="12" fill="none" stroke="#f4f4f4" stroke-width="1.8"/><rect x="256.4" y="59.9" width="12" height="12" fill="none" stroke="#f4f4f4" stroke-width="1.8"/><rect x="245.6" y="57.0" width="12" height="12" fill="none" stroke="#f4f4f4" stroke-width="1.8"/><rect x="268.2" y="64.8" width="12" height="12" fill="none" stroke="#f4f4f4" stroke-width="1.8"/><rect x="251.5" y="66.8" width="12" height="12" fill="none" stroke="#f4f4f4" stroke-width="1.8"/><rect x="237.7" y="69.7" width="12" height="12" fill="none" stroke="#f4f4f4" stroke-width="1.8"/><rect x="227.0" y="77.6" width="12" height="12" fill="none" stroke="#f4f4f4" stroke-width="1.8"/><rect x="226.0" y="62.9" width="12" height="12" fill="none" stroke="#f4f4f4" stroke-width="1.8"/><rect x="190.7" y="94.0" width="12" height="12" fill="none" stroke="#000" stroke-width="2.6"/><circle cx="152.5" cy="28.9" r="4.1" fill="#10e030" stroke="#111" stroke-width="1.2"/><circle cx="166.5" cy="53.9" r="4.1" fill="#4a7a4a" stroke="#111" stroke-width="1.2"/><circle cx="195.9" cy="45.8" r="4.1" fill="#8aa050" stroke="#111" stroke-width="1.2"/><circle cx="212.5" cy="38.2" r="4.1" fill="#f0e010" stroke="#111" stroke-width="1.2"/><circle cx="190.4" cy="67.8" r="4.1" fill="#5a6a4a" stroke="#111" stroke-width="1.2"/><circle cx="166.5" cy="96.8" r="4.1" fill="#70a898" stroke="#111" stroke-width="1.2"/><circle cx="152.5" cy="109.9" r="4.1" fill="#10d8e0" stroke="#111" stroke-width="1.2"/><circle cx="189.5" cy="125.9" r="4.1" fill="#000000" stroke="#111" stroke-width="1.2"/><circle cx="153.3" cy="137.8" r="4.1" fill="#10809a" stroke="#111" stroke-width="1.2"/><circle cx="175.5" cy="137.8" r="4.1" fill="#6a7890" stroke="#111" stroke-width="1.2"/><circle cx="188.5" cy="139.9" r="4.1" fill="#9890b0" stroke="#111" stroke-width="1.2"/><circle cx="207.3" cy="156.9" r="4.1" fill="#504060" stroke="#111" stroke-width="1.2"/><circle cx="170.5" cy="175.9" r="4.1" fill="#607090" stroke="#111" stroke-width="1.2"/><circle cx="165.5" cy="210.7" r="4.1" fill="#405080" stroke="#111" stroke-width="1.2"/><circle cx="153.4" cy="263.6" r="4.1" fill="#0010ff" stroke="#111" stroke-width="1.2"/><circle cx="245.5" cy="185.8" r="4.1" fill="#ff20ff" stroke="#111" stroke-width="1.2"/><circle cx="388.3" cy="65.9" r="4.1" fill="#e01010" stroke="#111" stroke-width="1.2"/><circle cx="331.3" cy="84.0" r="4.1" fill="#a03040" stroke="#111" stroke-width="1.2"/><circle cx="281.1" cy="96.0" r="4.1" fill="#b06070" stroke="#111" stroke-width="1.2"/><circle cx="249.6" cy="134.8" r="4.1" fill="#b06090" stroke="#111" stroke-width="1.2"/><circle cx="249.2" cy="49.6" r="4.1" fill="#d0a050" stroke="#111" stroke-width="1.2"/><circle cx="230.0" cy="42.7" r="4.1" fill="#e0c040" stroke="#111" stroke-width="1.2"/><circle cx="278.8" cy="54.5" r="4.1" fill="#c08850" stroke="#111" stroke-width="1.2"/><circle cx="282.7" cy="55.7" r="4.1" fill="#8a5a30" stroke="#111" stroke-width="1.2"/><circle cx="263.4" cy="60.4" r="4.1" fill="#6a4a30" stroke="#111" stroke-width="1.2"/><circle cx="256.1" cy="63.6" r="4.1" fill="#8a6040" stroke="#111" stroke-width="1.2"/><circle cx="270.3" cy="65.9" r="4.1" fill="#5a3a20" stroke="#111" stroke-width="1.2"/><circle cx="240.2" cy="69.5" r="4.1" fill="#c09070" stroke="#111" stroke-width="1.2"/><circle cx="250.0" cy="69.5" r="4.1" fill="#d09a78" stroke="#111" stroke-width="1.2"/><circle cx="254.2" cy="76.7" r="4.1" fill="#f0a888" stroke="#111" stroke-width="1.2"/><circle cx="244.7" cy="77.7" r="4.1" fill="#d09070" stroke="#111" stroke-width="1.2"/><circle cx="237.8" cy="76.7" r="4.1" fill="#c88a70" stroke="#111" stroke-width="1.2"/><circle cx="233.0" cy="77.7" r="4.1" fill="#e0a888" stroke="#111" stroke-width="1.2"/><circle cx="235.5" cy="82.0" r="4.1" fill="#5a3a2a" stroke="#111" stroke-width="1.2"/><circle cx="222.2" cy="86.8" r="4.1" fill="#f0c0a8" stroke="#111" stroke-width="1.2"/><circle cx="224.6" cy="78.7" r="4.1" fill="#f0c0a8" stroke="#111" stroke-width="1.2"/><circle cx="195.9" cy="99.7" r="4.1" fill="#505050" stroke="#111" stroke-width="1.2"/><circle cx="195.9" cy="104.6" r="4.1" fill="#a0a0a0" stroke="#111" stroke-width="1.2"/></svg>
<div class="bx" style="left:409.3px;top:300.8px;width:184.4px;height:120.4px;overflow:hidden"><svg class="bx" style="left:-409.3px;top:-300.8px" width="602" height="463"><rect x="449.0" y="340.4" width="12" height="12" fill="none" stroke="#f4f4f4" stroke-width="1.8"/><rect x="521.9" y="327.4" width="12" height="12" fill="none" stroke="#f4f4f4" stroke-width="1.8"/><rect x="555.9" y="327.4" width="12" height="12" fill="none" stroke="#f4f4f4" stroke-width="1.8"/><rect x="494.9" y="354.2" width="12" height="12" fill="none" stroke="#f4f4f4" stroke-width="1.8"/><rect x="507.8" y="363.4" width="12" height="12" fill="none" stroke="#f4f4f4" stroke-width="1.8"/><rect x="554.8" y="354.5" width="12" height="12" fill="none" stroke="#f4f4f4" stroke-width="1.8"/><rect x="497.0" y="381.4" width="12" height="12" fill="none" stroke="#f4f4f4" stroke-width="1.8"/><rect x="421.2" y="363.9" width="12" height="12" fill="none" stroke="#f4f4f4" stroke-width="1.8"/><rect x="435.0" y="363.1" width="12" height="12" fill="none" stroke="#f4f4f4" stroke-width="1.8"/><rect x="440.0" y="369.1" width="12" height="12" fill="none" stroke="#f4f4f4" stroke-width="1.8"/><rect x="445.0" y="377.3" width="12" height="12" fill="none" stroke="#f4f4f4" stroke-width="1.8"/><rect x="412.0" y="374.4" width="12" height="12" fill="none" stroke="#f4f4f4" stroke-width="1.8"/><rect x="405.0" y="367.1" width="12" height="12" fill="none" stroke="#f4f4f4" stroke-width="1.8"/><circle cx="474.0" cy="345.1" r="4.1" fill="#7a4a28" stroke="#111" stroke-width="1.2"/><circle cx="508.6" cy="344.0" r="4.1" fill="#6a4028" stroke="#111" stroke-width="1.2"/><circle cx="505.4" cy="367.9" r="4.1" fill="#5a3a28" stroke="#111" stroke-width="1.2"/><circle cx="421.5" cy="372.8" r="4.1" fill="#d08058" stroke="#111" stroke-width="1.2"/><circle cx="429.3" cy="382.0" r="4.1" fill="#c07050" stroke="#111" stroke-width="1.2"/><circle cx="411.0" cy="398.7" r="4.1" fill="#f09870" stroke="#111" stroke-width="1.2"/><circle cx="591.6" cy="323.4" r="4.1" fill="#d08a50" stroke="#111" stroke-width="1.2"/><circle cx="591.6" cy="334.5" r="4.1" fill="#8a5a38" stroke="#111" stroke-width="1.2"/></svg></div>
</div>
<div class="bx" style="left:1313px;top:491px;width:236px;height:25px;background:#2b2b2b"></div>
<div class="ab" style="left:1314.00px;top:494.94px;font-size:18.50px;line-height:18.50px;color:#f2f2f2;transform:scaleX(0.9964);transform-origin:0 0;">RGB Triplet: 217, 140, 94</div>
<div class="bx" style="left:951.5px;top:59px;width:602.5px;height:463.5px;border:1.3px solid #a8a8a8"></div>
<svg class="bx" style="left:900px;top:40px" width="658" height="515"><line x1="52.0" y1="482" x2="52.0" y2="487" stroke="#c0c0c0" stroke-width="1.3"/><line x1="102.0" y1="482" x2="102.0" y2="487" stroke="#c0c0c0" stroke-width="1.3"/><line x1="152.0" y1="482" x2="152.0" y2="487" stroke="#c0c0c0" stroke-width="1.3"/><line x1="202.0" y1="482" x2="202.0" y2="487" stroke="#c0c0c0" stroke-width="1.3"/><line x1="252.0" y1="482" x2="252.0" y2="487" stroke="#c0c0c0" stroke-width="1.3"/><line x1="302.0" y1="482" x2="302.0" y2="487" stroke="#c0c0c0" stroke-width="1.3"/><line x1="352.0" y1="482" x2="352.0" y2="487" stroke="#c0c0c0" stroke-width="1.3"/><line x1="402.0" y1="482" x2="402.0" y2="487" stroke="#c0c0c0" stroke-width="1.3"/><line x1="452.0" y1="482" x2="452.0" y2="487" stroke="#c0c0c0" stroke-width="1.3"/><line x1="502.0" y1="482" x2="502.0" y2="487" stroke="#c0c0c0" stroke-width="1.3"/><line x1="552.0" y1="482" x2="552.0" y2="487" stroke="#c0c0c0" stroke-width="1.3"/><line x1="602.0" y1="482" x2="602.0" y2="487" stroke="#c0c0c0" stroke-width="1.3"/><line x1="47" y1="482.0" x2="52" y2="482.0" stroke="#c0c0c0" stroke-width="1.3"/><line x1="47" y1="443.5" x2="52" y2="443.5" stroke="#c0c0c0" stroke-width="1.3"/><line x1="47" y1="405.0" x2="52" y2="405.0" stroke="#c0c0c0" stroke-width="1.3"/><line x1="47" y1="366.5" x2="52" y2="366.5" stroke="#c0c0c0" stroke-width="1.3"/><line x1="47" y1="328.0" x2="52" y2="328.0" stroke="#c0c0c0" stroke-width="1.3"/><line x1="47" y1="289.5" x2="52" y2="289.5" stroke="#c0c0c0" stroke-width="1.3"/><line x1="47" y1="251.0" x2="52" y2="251.0" stroke="#c0c0c0" stroke-width="1.3"/><line x1="47" y1="212.5" x2="52" y2="212.5" stroke="#c0c0c0" stroke-width="1.3"/><line x1="47" y1="174.0" x2="52" y2="174.0" stroke="#c0c0c0" stroke-width="1.3"/><line x1="47" y1="135.5" x2="52" y2="135.5" stroke="#c0c0c0" stroke-width="1.3"/><line x1="47" y1="97.0" x2="52" y2="97.0" stroke="#c0c0c0" stroke-width="1.3"/><line x1="47" y1="58.5" x2="52" y2="58.5" stroke="#c0c0c0" stroke-width="1.3"/></svg>
<div class="ab" style="left:948.52px;top:530.92px;font-size:12.50px;line-height:12.50px;color:#d8d8d8;">0</div>
<div class="ab" style="left:989.84px;top:530.92px;font-size:12.50px;line-height:12.50px;color:#d8d8d8;">0,05</div>
<div class="ab" style="left:1043.31px;top:530.92px;font-size:12.50px;line-height:12.50px;color:#d8d8d8;">0,1</div>
<div class="ab" style="left:1089.84px;top:530.92px;font-size:12.50px;line-height:12.50px;color:#d8d8d8;">0,15</div>
<div class="ab" style="left:1143.31px;top:530.92px;font-size:12.50px;line-height:12.50px;color:#d8d8d8;">0,2</div>
<div class="ab" style="left:1189.84px;top:530.92px;font-size:12.50px;line-height:12.50px;color:#d8d8d8;">0,25</div>
<div class="ab" style="left:1243.31px;top:530.92px;font-size:12.50px;line-height:12.50px;color:#d8d8d8;">0,3</div>
<div class="ab" style="left:1289.84px;top:530.92px;font-size:12.50px;line-height:12.50px;color:#d8d8d8;">0,35</div>
<div class="ab" style="left:1343.31px;top:530.92px;font-size:12.50px;line-height:12.50px;color:#d8d8d8;">0,4</div>
<div class="ab" style="left:1389.84px;top:530.92px;font-size:12.50px;line-height:12.50px;color:#d8d8d8;">0,45</div>
<div class="ab" style="left:1443.31px;top:530.92px;font-size:12.50px;line-height:12.50px;color:#d8d8d8;">0,5</div>
<div class="ab" style="left:1489.84px;top:530.92px;font-size:12.50px;line-height:12.50px;color:#d8d8d8;">0,55</div>
<div class="ab" style="left:939.05px;top:516.92px;font-size:12.50px;line-height:12.50px;color:#dadada;">0</div>
<div class="ab" style="left:921.67px;top:478.42px;font-size:12.50px;line-height:12.50px;color:#dadada;">0,05</div>
<div class="ab" style="left:928.62px;top:439.92px;font-size:12.50px;line-height:12.50px;color:#dadada;">0,1</div>
<div class="ab" style="left:921.67px;top:401.42px;font-size:12.50px;line-height:12.50px;color:#dadada;">0,15</div>
<div class="ab" style="left:928.62px;top:362.92px;font-size:12.50px;line-height:12.50px;color:#dadada;">0,2</div>
<div class="ab" style="left:921.67px;top:324.42px;font-size:12.50px;line-height:12.50px;color:#dadada;">0,25</div>
<div class="ab" style="left:928.62px;top:285.92px;font-size:12.50px;line-height:12.50px;color:#dadada;">0,3</div>
<div class="ab" style="left:921.67px;top:247.42px;font-size:12.50px;line-height:12.50px;color:#dadada;">0,35</div>
<div class="ab" style="left:928.62px;top:208.92px;font-size:12.50px;line-height:12.50px;color:#dadada;">0,4</div>
<div class="ab" style="left:921.67px;top:170.42px;font-size:12.50px;line-height:12.50px;color:#dadada;">0,45</div>
<div class="ab" style="left:928.62px;top:131.92px;font-size:12.50px;line-height:12.50px;color:#dadada;">0,5</div>
<div class="ab" style="left:921.67px;top:93.42px;font-size:12.50px;line-height:12.50px;color:#dadada;">0,55</div>
<div class="bx" style="left:298px;top:567px;width:1262px;height:213.5px;background:#333;border-left:2px solid #1e1e1e;border-top:1px solid #1e1e1e;overflow:hidden">
<div class="bx" style="left:0;top:0;width:1262px;height:12.5px;background:#343434"></div>
<div class="bx" style="left:0;top:12.3px;width:1262px;height:11.6px;background:#161616"></div>
<div class="bx" style="left:0;top:23.80px;width:1262px;height:22.05px;background:#464646"></div>
<div class="bx" style="left:0;top:45.65px;width:1262px;height:22.05px;background:#868686"></div>
<div class="bx" style="left:0;top:67.50px;width:1262px;height:22.05px;background:#464646"></div>
<div class="bx" style="left:0;top:89.35px;width:1262px;height:22.05px;background:#868686"></div>
<div class="bx" style="left:0;top:111.20px;width:1262px;height:22.05px;background:#464646"></div>
<div class="bx" style="left:0;top:133.05px;width:1262px;height:22.05px;background:#868686"></div>
<div class="bx" style="left:0;top:154.90px;width:1262px;height:22.05px;background:#464646"></div>
<div class="bx" style="left:0;top:176.75px;width:1262px;height:22.05px;background:#868686"></div>
<div class="bx" style="left:0;top:200px;width:1262px;height:13px;background:#5c5c5c"></div>
<div class="bx" style="left:15px;top:201px;width:376px;height:11px;border-radius:6px;background:#3c3c3c"></div>
<div class="bx" style="left:1px;top:201px;width:12px;height:11px;border-radius:2px;background:#6e6e6e"></div>
<div class="bx" style="left:1241px;top:201px;width:12px;height:11px;border-radius:2px;background:#6e6e6e"></div>
</div>
<div class="bx" style="left:303px;top:769.5px;width:0;height:0;border-top:4px solid transparent;border-bottom:4px solid transparent;border-right:5px solid #3a3a3a"></div>
<div class="bx" style="left:1547px;top:769.5px;width:0;height:0;border-top:4px solid transparent;border-bottom:4px solid transparent;border-left:5px solid #3a3a3a"></div>
<div class="ab" style="left:313.00px;top:596.15px;font-size:14.00px;line-height:14.00px;color:#f2f2f2;font-weight:bold;transform:scaleX(1.2127);transform-origin:0 0;">x: CIE31</div>
<div class="ab" style="left:313.00px;top:618.00px;font-size:14.00px;line-height:14.00px;color:#f2f2f2;font-weight:bold;transform:scaleX(1.2127);transform-origin:0 0;">y: CIE31</div>
<div class="ab" style="left:313.00px;top:639.85px;font-size:14.00px;line-height:14.00px;color:#f2f2f2;font-weight:bold;transform:scaleX(1.2101);transform-origin:0 0;">Y</div>
<div class="ab" style="left:313.00px;top:661.70px;font-size:14.00px;line-height:14.00px;color:#f2f2f2;font-weight:bold;transform:scaleX(1.2639);transform-origin:0 0;">Target x:CIE31</div>
<div class="ab" style="left:313.00px;top:683.55px;font-size:14.00px;line-height:14.00px;color:#f2f2f2;font-weight:bold;transform:scaleX(1.2639);transform-origin:0 0;">Target y:CIE31</div>
<div class="ab" style="left:313.00px;top:705.40px;font-size:14.00px;line-height:14.00px;color:#f2f2f2;font-weight:bold;transform:scaleX(1.2956);transform-origin:0 0;">Target Y</div>
<div class="ab" style="left:313.00px;top:727.25px;font-size:14.00px;line-height:14.00px;color:#f2f2f2;font-weight:bold;transform:scaleX(1.2786);transform-origin:0 0;">ΔE 2000</div>
<div class="ab" style="left:313.00px;top:749.10px;font-size:14.00px;line-height:14.00px;color:#f2f2f2;font-weight:bold;transform:scaleX(1.2469);transform-origin:0 0;">ΔE ITP</div>
<div class="ab" style="left:469.50px;top:573.74px;font-size:13.30px;line-height:13.30px;color:#f4f4f4;font-weight:bold;transform:scaleX(1.2266);transform-origin:0 0;">White</div>
<div class="ab" style="left:546.00px;top:573.74px;font-size:13.30px;line-height:13.30px;color:#f4f4f4;font-weight:bold;transform:scaleX(1.1679);transform-origin:0 0;">Gray 80</div>
<div class="ab" style="left:628.40px;top:573.74px;font-size:13.30px;line-height:13.30px;color:#f4f4f4;font-weight:bold;transform:scaleX(1.1700);transform-origin:0 0;">Gray 65</div>
<div class="ab" style="left:710.70px;top:573.74px;font-size:13.30px;line-height:13.30px;color:#f4f4f4;font-weight:bold;transform:scaleX(1.1700);transform-origin:0 0;">Gray 50</div>
<div class="ab" style="left:793.00px;top:573.74px;font-size:13.30px;line-height:13.30px;color:#f4f4f4;font-weight:bold;transform:scaleX(1.1679);transform-origin:0 0;">Gray 35</div>
<div class="ab" style="left:880.00px;top:573.74px;font-size:13.30px;line-height:13.30px;color:#f4f4f4;font-weight:bold;transform:scaleX(1.0876);transform-origin:0 0;">Black</div>
<div class="ab" style="left:940.50px;top:573.74px;font-size:13.30px;line-height:13.30px;color:#f4f4f4;font-weight:bold;transform:scaleX(1.1213);transform-origin:0 0;">Dark Skin</div>
<div class="ab" style="left:1020.30px;top:573.74px;font-size:13.30px;line-height:13.30px;color:#f4f4f4;font-weight:bold;transform:scaleX(1.1030);transform-origin:0 0;">Light Skin</div>
<div class="ab" style="left:1103.00px;top:573.74px;font-size:13.30px;line-height:13.30px;color:#f4f4f4;font-weight:bold;transform:scaleX(1.1018);transform-origin:0 0;">Blue Sky</div>
<div class="ab" style="left:1180.40px;top:573.74px;font-size:13.30px;line-height:13.30px;color:#f4f4f4;font-weight:bold;transform:scaleX(1.1169);transform-origin:0 0;">Foliage</div>
<div class="ab" style="left:1247.60px;top:573.74px;font-size:13.30px;line-height:13.30px;color:#f4f4f4;font-weight:bold;transform:scaleX(1.1568);transform-origin:0 0;">Blue Flower</div>
<div class="ab" style="left:1345.00px;top:573.74px;font-size:13.30px;line-height:13.30px;color:#f4f4f4;font-weight:bold;transform:scaleX(1.1332);transform-origin:0 0;">Bluish Green</div>
<div class="ab" style="left:1458.50px;top:573.74px;font-size:13.30px;line-height:13.30px;color:#f4f4f4;font-weight:bold;transform:scaleX(1.1425);transform-origin:0 0;">Orange</div>
<div class="ab" style="left:1531.40px;top:573.74px;font-size:13.30px;line-height:13.30px;color:#f4f4f4;font-weight:bold;transform:scaleX(1.0170);transform-origin:0 0;">Purple</div>
<div class="ab" style="left:455.50px;top:595.58px;font-size:14.20px;line-height:14.20px;color:#f0f0f0;transform:scaleX(1.1800);transform-origin:0 0;">0,3091</div>
<div class="ab" style="left:537.80px;top:595.58px;font-size:14.20px;line-height:14.20px;color:#f0f0f0;transform:scaleX(1.1800);transform-origin:0 0;">0,3076</div>
<div class="ab" style="left:620.20px;top:595.58px;font-size:14.20px;line-height:14.20px;color:#f0f0f0;transform:scaleX(1.1800);transform-origin:0 0;">0,3070</div>
<div class="ab" style="left:702.80px;top:595.58px;font-size:14.20px;line-height:14.20px;color:#f0f0f0;transform:scaleX(1.1800);transform-origin:0 0;">0,3065</div>
<div class="ab" style="left:785.20px;top:595.58px;font-size:14.20px;line-height:14.20px;color:#f0f0f0;transform:scaleX(1.1800);transform-origin:0 0;">0,3061</div>
<div class="ab" style="left:867.60px;top:595.58px;font-size:14.20px;line-height:14.20px;color:#f0f0f0;transform:scaleX(1.1800);transform-origin:0 0;">0,2752</div>
<div class="ab" style="left:940.50px;top:595.58px;font-size:14.20px;line-height:14.20px;color:#f0f0f0;transform:scaleX(1.1800);transform-origin:0 0;">0,3833</div>
<div class="ab" style="left:1020.30px;top:595.58px;font-size:14.20px;line-height:14.20px;color:#f0f0f0;transform:scaleX(1.1800);transform-origin:0 0;">0,3594</div>
<div class="ab" style="left:1102.20px;top:595.58px;font-size:14.20px;line-height:14.20px;color:#f0f0f0;transform:scaleX(1.1800);transform-origin:0 0;">0,2499</div>
<div class="ab" style="left:1174.70px;top:595.58px;font-size:14.20px;line-height:14.20px;color:#f0f0f0;transform:scaleX(1.1800);transform-origin:0 0;">0,3467</div>
<div class="ab" style="left:1247.60px;top:595.58px;font-size:14.20px;line-height:14.20px;color:#f0f0f0;transform:scaleX(1.1800);transform-origin:0 0;">0,2624</div>
<div class="ab" style="left:1345.00px;top:595.58px;font-size:14.20px;line-height:14.20px;color:#f0f0f0;transform:scaleX(1.1800);transform-origin:0 0;">0,2755</div>
<div class="ab" style="left:1448.70px;top:595.58px;font-size:14.20px;line-height:14.20px;color:#f0f0f0;transform:scaleX(1.1800);transform-origin:0 0;">0,4812</div>
<div class="ab" style="left:1531.40px;top:595.58px;font-size:14.20px;line-height:14.20px;color:#f0f0f0;transform:scaleX(1.1800);transform-origin:0 0;">0,2735</div>
<div class="ab" style="left:455.50px;top:617.43px;font-size:14.20px;line-height:14.20px;color:#f0f0f0;transform:scaleX(1.1800);transform-origin:0 0;">0,3282</div>
<div class="ab" style="left:537.80px;top:617.43px;font-size:14.20px;line-height:14.20px;color:#f0f0f0;transform:scaleX(1.1800);transform-origin:0 0;">0,3254</div>
<div class="ab" style="left:620.20px;top:617.43px;font-size:14.20px;line-height:14.20px;color:#f0f0f0;transform:scaleX(1.1800);transform-origin:0 0;">0,3242</div>
<div class="ab" style="left:702.80px;top:617.43px;font-size:14.20px;line-height:14.20px;color:#f0f0f0;transform:scaleX(1.1800);transform-origin:0 0;">0,3230</div>
<div class="ab" style="left:785.20px;top:617.43px;font-size:14.20px;line-height:14.20px;color:#f0f0f0;transform:scaleX(1.1800);transform-origin:0 0;">0,3218</div>
<div class="ab" style="left:867.60px;top:617.43px;font-size:14.20px;line-height:14.20px;color:#f0f0f0;transform:scaleX(1.1800);transform-origin:0 0;">0,2809</div>
<div class="ab" style="left:940.50px;top:617.43px;font-size:14.20px;line-height:14.20px;color:#f0f0f0;transform:scaleX(1.1800);transform-origin:0 0;">0,3564</div>
<div class="ab" style="left:1020.30px;top:617.43px;font-size:14.20px;line-height:14.20px;color:#f0f0f0;transform:scaleX(1.1800);transform-origin:0 0;">0,3471</div>
<div class="ab" style="left:1102.20px;top:617.43px;font-size:14.20px;line-height:14.20px;color:#f0f0f0;transform:scaleX(1.1800);transform-origin:0 0;">0,2662</div>
<div class="ab" style="left:1174.70px;top:617.43px;font-size:14.20px;line-height:14.20px;color:#f0f0f0;transform:scaleX(1.1800);transform-origin:0 0;">0,4115</div>
<div class="ab" style="left:1247.60px;top:617.43px;font-size:14.20px;line-height:14.20px;color:#f0f0f0;transform:scaleX(1.1800);transform-origin:0 0;">0,2590</div>
<div class="ab" style="left:1345.00px;top:617.43px;font-size:14.20px;line-height:14.20px;color:#f0f0f0;transform:scaleX(1.1800);transform-origin:0 0;">0,3475</div>
<div class="ab" style="left:1448.70px;top:617.43px;font-size:14.20px;line-height:14.20px;color:#f0f0f0;transform:scaleX(1.1800);transform-origin:0 0;">0,4041</div>
<div class="ab" style="left:1531.40px;top:617.43px;font-size:14.20px;line-height:14.20px;color:#f0f0f0;transform:scaleX(1.1800);transform-origin:0 0;">0,2063</div>
<div class="ab" style="left:455.50px;top:639.28px;font-size:14.20px;line-height:14.20px;color:#f0f0f0;transform:scaleX(1.1800);transform-origin:0 0;">384,4277</div>
<div class="ab" style="left:537.80px;top:639.28px;font-size:14.20px;line-height:14.20px;color:#f0f0f0;transform:scaleX(1.1800);transform-origin:0 0;">306,8255</div>
<div class="ab" style="left:620.20px;top:639.28px;font-size:14.20px;line-height:14.20px;color:#f0f0f0;transform:scaleX(1.1800);transform-origin:0 0;">249,1683</div>
<div class="ab" style="left:702.80px;top:639.28px;font-size:14.20px;line-height:14.20px;color:#f0f0f0;transform:scaleX(1.1800);transform-origin:0 0;">193,5096</div>
<div class="ab" style="left:785.20px;top:639.28px;font-size:14.20px;line-height:14.20px;color:#f0f0f0;transform:scaleX(1.1800);transform-origin:0 0;">136,0467</div>
<div class="ab" style="left:867.60px;top:639.28px;font-size:14.20px;line-height:14.20px;color:#f0f0f0;transform:scaleX(1.1800);transform-origin:0 0;">0,3619</div>
<div class="ab" style="left:940.50px;top:639.28px;font-size:14.20px;line-height:14.20px;color:#f0f0f0;transform:scaleX(1.1800);transform-origin:0 0;">37,9144</div>
<div class="ab" style="left:1020.30px;top:639.28px;font-size:14.20px;line-height:14.20px;color:#f0f0f0;transform:scaleX(1.1800);transform-origin:0 0;">134,3675</div>
<div class="ab" style="left:1102.20px;top:639.28px;font-size:14.20px;line-height:14.20px;color:#f0f0f0;transform:scaleX(1.1800);transform-origin:0 0;">78,6446</div>
<div class="ab" style="left:1174.70px;top:639.28px;font-size:14.20px;line-height:14.20px;color:#f0f0f0;transform:scaleX(1.1800);transform-origin:0 0;">48,4188</div>
<div class="ab" style="left:1247.60px;top:639.28px;font-size:14.20px;line-height:14.20px;color:#f0f0f0;transform:scaleX(1.1800);transform-origin:0 0;">100,1592</div>
<div class="ab" style="left:1345.00px;top:639.28px;font-size:14.20px;line-height:14.20px;color:#f0f0f0;transform:scaleX(1.1800);transform-origin:0 0;">163,4447</div>
<div class="ab" style="left:1448.70px;top:639.28px;font-size:14.20px;line-height:14.20px;color:#f0f0f0;transform:scaleX(1.1800);transform-origin:0 0;">102,6812</div>
<div class="ab" style="left:1531.40px;top:639.28px;font-size:14.20px;line-height:14.20px;color:#f0f0f0;transform:scaleX(1.1800);transform-origin:0 0;">54,9177</div>
<div class="ab" style="left:455.50px;top:661.13px;font-size:14.20px;line-height:14.20px;color:#f0f0f0;transform:scaleX(1.1800);transform-origin:0 0;">0,3127</div>
<div class="ab" style="left:537.80px;top:661.13px;font-size:14.20px;line-height:14.20px;color:#f0f0f0;transform:scaleX(1.1800);transform-origin:0 0;">0,3127</div>
<div class="ab" style="left:620.20px;top:661.13px;font-size:14.20px;line-height:14.20px;color:#f0f0f0;transform:scaleX(1.1800);transform-origin:0 0;">0,3127</div>
<div class="ab" style="left:702.80px;top:661.13px;font-size:14.20px;line-height:14.20px;color:#f0f0f0;transform:scaleX(1.1800);transform-origin:0 0;">0,3127</div>
<div class="ab" style="left:785.20px;top:661.13px;font-size:14.20px;line-height:14.20px;color:#f0f0f0;transform:scaleX(1.1800);transform-origin:0 0;">0,3127</div>
<div class="ab" style="left:867.60px;top:661.13px;font-size:14.20px;line-height:14.20px;color:#f0f0f0;transform:scaleX(1.1800);transform-origin:0 0;">0,3127</div>
<div class="ab" style="left:940.50px;top:661.13px;font-size:14.20px;line-height:14.20px;color:#f0f0f0;transform:scaleX(1.1800);transform-origin:0 0;">0,4003</div>
<div class="ab" style="left:1020.30px;top:661.13px;font-size:14.20px;line-height:14.20px;color:#f0f0f0;transform:scaleX(1.1800);transform-origin:0 0;">0,3795</div>
<div class="ab" style="left:1102.20px;top:661.13px;font-size:14.20px;line-height:14.20px;color:#f0f0f0;transform:scaleX(1.1800);transform-origin:0 0;">0,2496</div>
<div class="ab" style="left:1174.70px;top:661.13px;font-size:14.20px;line-height:14.20px;color:#f0f0f0;transform:scaleX(1.1800);transform-origin:0 0;">0,3395</div>
<div class="ab" style="left:1247.60px;top:661.13px;font-size:14.20px;line-height:14.20px;color:#f0f0f0;transform:scaleX(1.1800);transform-origin:0 0;">0,2681</div>
<div class="ab" style="left:1345.00px;top:661.13px;font-size:14.20px;line-height:14.20px;color:#f0f0f0;transform:scaleX(1.1800);transform-origin:0 0;">0,2626</div>
<div class="ab" style="left:1448.70px;top:661.13px;font-size:14.20px;line-height:14.20px;color:#f0f0f0;transform:scaleX(1.1800);transform-origin:0 0;">0,5122</div>
<div class="ab" style="left:1531.40px;top:661.13px;font-size:14.20px;line-height:14.20px;color:#f0f0f0;transform:scaleX(1.1800);transform-origin:0 0;">0,2710</div>
<div class="ab" style="left:455.50px;top:682.98px;font-size:14.20px;line-height:14.20px;color:#f0f0f0;transform:scaleX(1.1800);transform-origin:0 0;">0,3290</div>
<div class="ab" style="left:537.80px;top:682.98px;font-size:14.20px;line-height:14.20px;color:#f0f0f0;transform:scaleX(1.1800);transform-origin:0 0;">0,3290</div>
<div class="ab" style="left:620.20px;top:682.98px;font-size:14.20px;line-height:14.20px;color:#f0f0f0;transform:scaleX(1.1800);transform-origin:0 0;">0,3290</div>
<div class="ab" style="left:702.80px;top:682.98px;font-size:14.20px;line-height:14.20px;color:#f0f0f0;transform:scaleX(1.1800);transform-origin:0 0;">0,3290</div>
<div class="ab" style="left:785.20px;top:682.98px;font-size:14.20px;line-height:14.20px;color:#f0f0f0;transform:scaleX(1.1800);transform-origin:0 0;">0,3290</div>
<div class="ab" style="left:867.60px;top:682.98px;font-size:14.20px;line-height:14.20px;color:#f0f0f0;transform:scaleX(1.1800);transform-origin:0 0;">0,3290</div>
<div class="ab" style="left:940.50px;top:682.98px;font-size:14.20px;line-height:14.20px;color:#f0f0f0;transform:scaleX(1.1800);transform-origin:0 0;">0,3642</div>
<div class="ab" style="left:1020.30px;top:682.98px;font-size:14.20px;line-height:14.20px;color:#f0f0f0;transform:scaleX(1.1800);transform-origin:0 0;">0,3562</div>
<div class="ab" style="left:1102.20px;top:682.98px;font-size:14.20px;line-height:14.20px;color:#f0f0f0;transform:scaleX(1.1800);transform-origin:0 0;">0,2656</div>
<div class="ab" style="left:1174.70px;top:682.98px;font-size:14.20px;line-height:14.20px;color:#f0f0f0;transform:scaleX(1.1800);transform-origin:0 0;">0,4271</div>
<div class="ab" style="left:1247.60px;top:682.98px;font-size:14.20px;line-height:14.20px;color:#f0f0f0;transform:scaleX(1.1800);transform-origin:0 0;">0,2525</div>
<div class="ab" style="left:1345.00px;top:682.98px;font-size:14.20px;line-height:14.20px;color:#f0f0f0;transform:scaleX(1.1800);transform-origin:0 0;">0,3616</div>
<div class="ab" style="left:1448.70px;top:682.98px;font-size:14.20px;line-height:14.20px;color:#f0f0f0;transform:scaleX(1.1800);transform-origin:0 0;">0,4063</div>
<div class="ab" style="left:1531.40px;top:682.98px;font-size:14.20px;line-height:14.20px;color:#f0f0f0;transform:scaleX(1.1800);transform-origin:0 0;">0,1991</div>
<div class="ab" style="left:455.50px;top:704.83px;font-size:14.20px;line-height:14.20px;color:#f0f0f0;transform:scaleX(1.1800);transform-origin:0 0;">384,4277</div>
<div class="ab" style="left:537.80px;top:704.83px;font-size:14.20px;line-height:14.20px;color:#f0f0f0;transform:scaleX(1.1800);transform-origin:0 0;">304,1968</div>
<div class="ab" style="left:620.20px;top:704.83px;font-size:14.20px;line-height:14.20px;color:#f0f0f0;transform:scaleX(1.1800);transform-origin:0 0;">245,1099</div>
<div class="ab" style="left:702.80px;top:704.83px;font-size:14.20px;line-height:14.20px;color:#f0f0f0;transform:scaleX(1.1800);transform-origin:0 0;">188,7620</div>
<div class="ab" style="left:785.20px;top:704.83px;font-size:14.20px;line-height:14.20px;color:#f0f0f0;transform:scaleX(1.1800);transform-origin:0 0;">131,4414</div>
<div class="ab" style="left:867.60px;top:704.83px;font-size:14.20px;line-height:14.20px;color:#f0f0f0;transform:scaleX(1.1800);transform-origin:0 0;">0,0000</div>
<div class="ab" style="left:940.50px;top:704.83px;font-size:14.20px;line-height:14.20px;color:#f0f0f0;transform:scaleX(1.1800);transform-origin:0 0;">38,7246</div>
<div class="ab" style="left:1020.30px;top:704.83px;font-size:14.20px;line-height:14.20px;color:#f0f0f0;transform:scaleX(1.1800);transform-origin:0 0;">134,1467</div>
<div class="ab" style="left:1102.20px;top:704.83px;font-size:14.20px;line-height:14.20px;color:#f0f0f0;transform:scaleX(1.1800);transform-origin:0 0;">71,8818</div>
<div class="ab" style="left:1174.70px;top:704.83px;font-size:14.20px;line-height:14.20px;color:#f0f0f0;transform:scaleX(1.1800);transform-origin:0 0;">50,1004</div>
<div class="ab" style="left:1247.60px;top:704.83px;font-size:14.20px;line-height:14.20px;color:#f0f0f0;transform:scaleX(1.1800);transform-origin:0 0;">89,6427</div>
<div class="ab" style="left:1345.00px;top:704.83px;font-size:14.20px;line-height:14.20px;color:#f0f0f0;transform:scaleX(1.1800);transform-origin:0 0;">160,9715</div>
<div class="ab" style="left:1448.70px;top:704.83px;font-size:14.20px;line-height:14.20px;color:#f0f0f0;transform:scaleX(1.1800);transform-origin:0 0;">108,9769</div>
<div class="ab" style="left:1531.40px;top:704.83px;font-size:14.20px;line-height:14.20px;color:#f0f0f0;transform:scaleX(1.1800);transform-origin:0 0;">45,7146</div>
<div class="ab" style="left:455.50px;top:726.68px;font-size:14.20px;line-height:14.20px;color:#f0f0f0;transform:scaleX(1.1800);transform-origin:0 0;">2,3223</div>
<div class="ab" style="left:537.80px;top:726.68px;font-size:14.20px;line-height:14.20px;color:#f0f0f0;transform:scaleX(1.1800);transform-origin:0 0;">2,4026</div>
<div class="ab" style="left:620.20px;top:726.68px;font-size:14.20px;line-height:14.20px;color:#f0f0f0;transform:scaleX(1.1800);transform-origin:0 0;">2,5403</div>
<div class="ab" style="left:702.80px;top:726.68px;font-size:14.20px;line-height:14.20px;color:#f0f0f0;transform:scaleX(1.1800);transform-origin:0 0;">2,6780</div>
<div class="ab" style="left:785.20px;top:726.68px;font-size:14.20px;line-height:14.20px;color:#f0f0f0;transform:scaleX(1.1800);transform-origin:0 0;">2,7941</div>
<div class="ab" style="left:867.60px;top:726.68px;font-size:14.20px;line-height:14.20px;color:#f0f0f0;transform:scaleX(1.1800);transform-origin:0 0;">0,8314</div>
<div class="ab" style="left:940.50px;top:726.68px;font-size:14.20px;line-height:14.20px;color:#f0f0f0;transform:scaleX(1.1800);transform-origin:0 0;">2,2897</div>
<div class="ab" style="left:1020.30px;top:726.68px;font-size:14.20px;line-height:14.20px;color:#f0f0f0;transform:scaleX(1.1800);transform-origin:0 0;">3,7341</div>
<div class="ab" style="left:1102.20px;top:726.68px;font-size:14.20px;line-height:14.20px;color:#f0f0f0;transform:scaleX(1.1800);transform-origin:0 0;">2,0333</div>
<div class="ab" style="left:1174.70px;top:726.68px;font-size:14.20px;line-height:14.20px;color:#f0f0f0;transform:scaleX(1.1800);transform-origin:0 0;">3,3924</div>
<div class="ab" style="left:1247.60px;top:726.68px;font-size:14.20px;line-height:14.20px;color:#f0f0f0;transform:scaleX(1.1800);transform-origin:0 0;">4,4461</div>
<div class="ab" style="left:1345.00px;top:726.68px;font-size:14.20px;line-height:14.20px;color:#f0f0f0;transform:scaleX(1.1800);transform-origin:0 0;">4,9125</div>
<div class="ab" style="left:1448.70px;top:726.68px;font-size:14.20px;line-height:14.20px;color:#f0f0f0;transform:scaleX(1.1800);transform-origin:0 0;">3,7542</div>
<div class="ab" style="left:1531.40px;top:726.68px;font-size:14.20px;line-height:14.20px;color:#f0f0f0;transform:scaleX(1.1800);transform-origin:0 0;">5,2013</div>
<div class="ab" style="left:455.50px;top:748.53px;font-size:14.20px;line-height:14.20px;color:#f0f0f0;transform:scaleX(1.1800);transform-origin:0 0;">2,3267</div>
<div class="ab" style="left:537.80px;top:748.53px;font-size:14.20px;line-height:14.20px;color:#f0f0f0;transform:scaleX(1.1800);transform-origin:0 0;">3,1261</div>
<div class="ab" style="left:620.20px;top:748.53px;font-size:14.20px;line-height:14.20px;color:#f0f0f0;transform:scaleX(1.1800);transform-origin:0 0;">3,6162</div>
<div class="ab" style="left:702.80px;top:748.53px;font-size:14.20px;line-height:14.20px;color:#f0f0f0;transform:scaleX(1.1800);transform-origin:0 0;">4,1322</div>
<div class="ab" style="left:785.20px;top:748.53px;font-size:14.20px;line-height:14.20px;color:#f0f0f0;transform:scaleX(1.1800);transform-origin:0 0;">4,6988</div>
<div class="ab" style="left:867.60px;top:748.53px;font-size:14.20px;line-height:14.20px;color:#f0f0f0;transform:scaleX(1.1800);transform-origin:0 0;">75,9335</div>
<div class="ab" style="left:940.50px;top:748.53px;font-size:14.20px;line-height:14.20px;color:#f0f0f0;transform:scaleX(1.1800);transform-origin:0 0;">8,5157</div>
<div class="ab" style="left:1020.30px;top:748.53px;font-size:14.20px;line-height:14.20px;color:#f0f0f0;transform:scaleX(1.1800);transform-origin:0 0;">11,0206</div>
<div class="ab" style="left:1102.20px;top:748.53px;font-size:14.20px;line-height:14.20px;color:#f0f0f0;transform:scaleX(1.1800);transform-origin:0 0;">6,3545</div>
<div class="ab" style="left:1174.70px;top:748.53px;font-size:14.20px;line-height:14.20px;color:#f0f0f0;transform:scaleX(1.1800);transform-origin:0 0;">8,1648</div>
<div class="ab" style="left:1247.60px;top:748.53px;font-size:14.20px;line-height:14.20px;color:#f0f0f0;transform:scaleX(1.1800);transform-origin:0 0;">10,4319</div>
<div class="ab" style="left:1345.00px;top:748.53px;font-size:14.20px;line-height:14.20px;color:#f0f0f0;transform:scaleX(1.1800);transform-origin:0 0;">11,5436</div>
<div class="ab" style="left:1448.70px;top:748.53px;font-size:14.20px;line-height:14.20px;color:#f0f0f0;transform:scaleX(1.1800);transform-origin:0 0;">20,2638</div>
<div class="ab" style="left:1531.40px;top:748.53px;font-size:14.20px;line-height:14.20px;color:#f0f0f0;transform:scaleX(1.1800);transform-origin:0 0;">14,9522</div>
<div class="bx" style="left:0;top:852.5px;width:1240px;height:12px;background:#686868"></div>
<div class="bx" style="left:610px;top:854px;width:620px;height:10px;border-radius:5px;background:#444"></div>
<div class="bx" style="left:0;top:853px;width:10px;height:11px;border-radius:2px;background:#7c7c7c"></div>
<div class="bx" style="left:3px;top:855px;width:0;height:0;border-top:4px solid transparent;border-bottom:4px solid transparent;border-right:5px solid #333"></div>
<div class="bx" style="left:1228px;top:853px;width:11px;height:11px;border-radius:2px;background:#7c7c7c"></div>
<div class="bx" style="left:1232px;top:855px;width:0;height:0;border-top:4px solid transparent;border-bottom:4px solid transparent;border-left:5px solid #333"></div>
<div class="bx" style="left:-7px;top:804px;width:50px;height:48.5px;border-radius:4px 4px 0 0;background:linear-gradient(#b2b2b2,#9c9c9c 45%,#8a8a8a 75%,#6c6c6c)"></div>
<div class="bx" style="left:-2px;top:809px;width:40px;height:24px;border-radius:3.5px;background:#0b8bab;box-shadow:inset 0 0 1.5px rgba(0,0,0,.35)"></div>
<div class="ab" style="left:5.35px;top:838.47px;font-size:11.50px;line-height:11.50px;color:#2c2c2c;font-weight:bold;transform:scaleX(0.9000);transform-origin:0 0;">Cyan</div>
<div class="bx" style="left:45px;top:804px;width:50px;height:48.5px;border-radius:4px 4px 0 0;background:linear-gradient(#b2b2b2,#9c9c9c 45%,#8a8a8a 75%,#6c6c6c)"></div>
<div class="bx" style="left:50px;top:809px;width:40px;height:24px;border-radius:3.5px;background:#ff0000;box-shadow:inset 0 0 1.5px rgba(0,0,0,.35)"></div>
<div class="ab" style="left:46.25px;top:838.47px;font-size:11.50px;line-height:11.50px;color:#2c2c2c;font-weight:bold;transform:scaleX(0.8742);transform-origin:0 0;">100% Red</div>
<div class="bx" style="left:97px;top:804px;width:50px;height:48.5px;border-radius:4px 4px 0 0;background:linear-gradient(#b2b2b2,#9c9c9c 45%,#8a8a8a 75%,#6c6c6c)"></div>
<div class="bx" style="left:102px;top:809px;width:40px;height:12px;border-radius:3.5px;background:#00ff00;box-shadow:inset 0 0 1.5px rgba(0,0,0,.35)"></div>
<div class="ab" style="left:108.76px;top:826.47px;font-size:11.50px;line-height:11.50px;color:#2c2c2c;font-weight:bold;transform:scaleX(0.9000);transform-origin:0 0;">100%</div>
<div class="ab" style="left:107.04px;top:838.47px;font-size:11.50px;line-height:11.50px;color:#2c2c2c;font-weight:bold;transform:scaleX(0.9000);transform-origin:0 0;">Green</div>
<div class="bx" style="left:149px;top:804px;width:50px;height:48.5px;border-radius:4px 4px 0 0;background:linear-gradient(#b2b2b2,#9c9c9c 45%,#8a8a8a 75%,#6c6c6c)"></div>
<div class="bx" style="left:154px;top:809px;width:40px;height:12px;border-radius:3.5px;background:#0000ff;box-shadow:inset 0 0 1.5px rgba(0,0,0,.35)"></div>
<div class="ab" style="left:160.76px;top:826.47px;font-size:11.50px;line-height:11.50px;color:#2c2c2c;font-weight:bold;transform:scaleX(0.9000);transform-origin:0 0;">100%</div>
<div class="ab" style="left:162.79px;top:838.47px;font-size:11.50px;line-height:11.50px;color:#2c2c2c;font-weight:bold;transform:scaleX(0.9000);transform-origin:0 0;">Blue</div>
<div class="bx" style="left:201px;top:804px;width:50px;height:48.5px;border-radius:4px 4px 0 0;background:linear-gradient(#b2b2b2,#9c9c9c 45%,#8a8a8a 75%,#6c6c6c)"></div>
<div class="bx" style="left:206px;top:809px;width:40px;height:12px;border-radius:3.5px;background:#00ffff;box-shadow:inset 0 0 1.5px rgba(0,0,0,.35)"></div>
<div class="ab" style="left:212.76px;top:826.47px;font-size:11.50px;line-height:11.50px;color:#2c2c2c;font-weight:bold;transform:scaleX(0.9000);transform-origin:0 0;">100%</div>
<div class="ab" style="left:213.35px;top:838.47px;font-size:11.50px;line-height:11.50px;color:#2c2c2c;font-weight:bold;transform:scaleX(0.9000);transform-origin:0 0;">Cyan</div>
<div class="bx" style="left:253px;top:804px;width:50px;height:48.5px;border-radius:4px 4px 0 0;background:linear-gradient(#b2b2b2,#9c9c9c 45%,#8a8a8a 75%,#6c6c6c)"></div>
<div class="bx" style="left:258px;top:809px;width:40px;height:12px;border-radius:3.5px;background:#ff00ff;box-shadow:inset 0 0 1.5px rgba(0,0,0,.35)"></div>
<div class="ab" style="left:264.76px;top:826.47px;font-size:11.50px;line-height:11.50px;color:#2c2c2c;font-weight:bold;transform:scaleX(0.9000);transform-origin:0 0;">100%</div>
<div class="ab" style="left:257.01px;top:838.47px;font-size:11.50px;line-height:11.50px;color:#2c2c2c;font-weight:bold;transform:scaleX(0.9000);transform-origin:0 0;">Magenta</div>
<div class="bx" style="left:305px;top:804px;width:50px;height:48.5px;border-radius:4px 4px 0 0;background:linear-gradient(#b2b2b2,#9c9c9c 45%,#8a8a8a 75%,#6c6c6c)"></div>
<div class="bx" style="left:310px;top:809px;width:40px;height:12px;border-radius:3.5px;background:#ffff00;box-shadow:inset 0 0 1.5px rgba(0,0,0,.35)"></div>
<div class="ab" style="left:316.76px;top:826.47px;font-size:11.50px;line-height:11.50px;color:#2c2c2c;font-weight:bold;transform:scaleX(0.9000);transform-origin:0 0;">100%</div>
<div class="ab" style="left:313.89px;top:838.47px;font-size:11.50px;line-height:11.50px;color:#2c2c2c;font-weight:bold;transform:scaleX(0.9000);transform-origin:0 0;">Yellow</div>
<div class="bx" style="left:357px;top:804px;width:50px;height:48.5px;border-radius:4px 4px 0 0;background:linear-gradient(#b2b2b2,#9c9c9c 45%,#8a8a8a 75%,#6c6c6c)"></div>
<div class="bx" style="left:362px;top:809px;width:40px;height:24px;border-radius:3.5px;background:#6e3f24;box-shadow:inset 0 0 1.5px rgba(0,0,0,.35)"></div>
<div class="ab" style="left:375.67px;top:838.47px;font-size:11.50px;line-height:11.50px;color:#2c2c2c;font-weight:bold;transform:scaleX(0.9000);transform-origin:0 0;">2E</div>
<div class="bx" style="left:409px;top:804px;width:50px;height:48.5px;border-radius:4px 4px 0 0;background:linear-gradient(#b2b2b2,#9c9c9c 45%,#8a8a8a 75%,#6c6c6c)"></div>
<div class="bx" style="left:414px;top:809px;width:40px;height:24px;border-radius:3.5px;background:#c8876a;box-shadow:inset 0 0 1.5px rgba(0,0,0,.35)"></div>
<div class="ab" style="left:427.96px;top:838.47px;font-size:11.50px;line-height:11.50px;color:#2c2c2c;font-weight:bold;transform:scaleX(0.9000);transform-origin:0 0;">2F</div>
<div class="bx" style="left:461px;top:804px;width:50px;height:48.5px;border-radius:4px 4px 0 0;background:linear-gradient(#b2b2b2,#9c9c9c 45%,#8a8a8a 75%,#6c6c6c)"></div>
<div class="bx" style="left:466px;top:809px;width:40px;height:24px;border-radius:3.5px;background:#fec596;box-shadow:inset 0 0 1.5px rgba(0,0,0,.35)"></div>
<div class="ab" style="left:479.38px;top:838.47px;font-size:11.50px;line-height:11.50px;color:#2c2c2c;font-weight:bold;transform:scaleX(0.9000);transform-origin:0 0;">2K</div>
<div class="bx" style="left:513px;top:804px;width:50px;height:48.5px;border-radius:4px 4px 0 0;background:linear-gradient(#b2b2b2,#9c9c9c 45%,#8a8a8a 75%,#6c6c6c)"></div>
<div class="bx" style="left:518px;top:809px;width:40px;height:24px;border-radius:3.5px;background:#fdc5a5;box-shadow:inset 0 0 1.5px rgba(0,0,0,.35)"></div>
<div class="ab" style="left:531.38px;top:838.47px;font-size:11.50px;line-height:11.50px;color:#2c2c2c;font-weight:bold;transform:scaleX(0.9000);transform-origin:0 0;">5D</div>
<div class="bx" style="left:565px;top:804px;width:50px;height:48.5px;border-radius:4px 4px 0 0;background:linear-gradient(#b2b2b2,#9c9c9c 45%,#8a8a8a 75%,#6c6c6c)"></div>
<div class="bx" style="left:570px;top:809px;width:40px;height:24px;border-radius:3.5px;background:#f5a77a;box-shadow:inset 0 0 1.5px rgba(0,0,0,.35)"></div>
<div class="ab" style="left:583.67px;top:838.47px;font-size:11.50px;line-height:11.50px;color:#2c2c2c;font-weight:bold;transform:scaleX(0.9000);transform-origin:0 0;">7E</div>
<div class="bx" style="left:617px;top:804px;width:50px;height:48.5px;border-radius:4px 4px 0 0;background:linear-gradient(#b2b2b2,#9c9c9c 45%,#8a8a8a 75%,#6c6c6c)"></div>
<div class="bx" style="left:622px;top:809px;width:40px;height:24px;border-radius:3.5px;background:#c98c5a;box-shadow:inset 0 0 1.5px rgba(0,0,0,.35)"></div>
<div class="ab" style="left:635.96px;top:838.47px;font-size:11.50px;line-height:11.50px;color:#2c2c2c;font-weight:bold;transform:scaleX(0.9000);transform-origin:0 0;">7F</div>
<div class="bx" style="left:669px;top:804px;width:50px;height:48.5px;border-radius:4px 4px 0 0;background:linear-gradient(#b2b2b2,#9c9c9c 45%,#8a8a8a 75%,#6c6c6c)"></div>
<div class="bx" style="left:674px;top:809px;width:40px;height:24px;border-radius:3.5px;background:#8e5632;box-shadow:inset 0 0 1.5px rgba(0,0,0,.35)"></div>
<div class="ab" style="left:687.10px;top:838.47px;font-size:11.50px;line-height:11.50px;color:#2c2c2c;font-weight:bold;transform:scaleX(0.9000);transform-origin:0 0;">7G</div>
<div class="bx" style="left:721px;top:804px;width:50px;height:48.5px;border-radius:4px 4px 0 0;background:linear-gradient(#b2b2b2,#9c9c9c 45%,#8a8a8a 75%,#6c6c6c)"></div>
<div class="bx" style="left:726px;top:809px;width:40px;height:24px;border-radius:3.5px;background:#d59b78;box-shadow:inset 0 0 1.5px rgba(0,0,0,.35)"></div>
<div class="ab" style="left:739.38px;top:838.47px;font-size:11.50px;line-height:11.50px;color:#2c2c2c;font-weight:bold;transform:scaleX(0.9000);transform-origin:0 0;">7H</div>
<div class="bx" style="left:773px;top:804px;width:50px;height:48.5px;border-radius:4px 4px 0 0;background:linear-gradient(#b2b2b2,#9c9c9c 45%,#8a8a8a 75%,#6c6c6c)"></div>
<div class="bx" style="left:778px;top:809px;width:40px;height:24px;border-radius:3.5px;background:#a0561f;box-shadow:inset 0 0 1.5px rgba(0,0,0,.35)"></div>
<div class="ab" style="left:793.68px;top:838.47px;font-size:11.50px;line-height:11.50px;color:#2c2c2c;font-weight:bold;transform:scaleX(0.9000);transform-origin:0 0;">7I</div>
<div class="bx" style="left:825px;top:804px;width:50px;height:48.5px;border-radius:4px 4px 0 0;background:linear-gradient(#b2b2b2,#9c9c9c 45%,#8a8a8a 75%,#6c6c6c)"></div>
<div class="bx" style="left:830px;top:809px;width:40px;height:24px;border-radius:3.5px;background:#dc8e64;box-shadow:inset 0 0 1.5px rgba(0,0,0,.35)"></div>
<div class="ab" style="left:844.24px;top:838.47px;font-size:11.50px;line-height:11.50px;color:#2c2c2c;font-weight:bold;transform:scaleX(0.9000);transform-origin:0 0;">7J</div>
<div class="bx" style="left:877px;top:804px;width:50px;height:48.5px;border-radius:4px 4px 0 0;background:linear-gradient(#b2b2b2,#9c9c9c 45%,#8a8a8a 75%,#6c6c6c)"></div>
<div class="bx" style="left:882px;top:809px;width:40px;height:24px;border-radius:3.5px;background:#d68e6e;box-shadow:inset 0 0 1.5px rgba(0,0,0,.35)"></div>
<div class="ab" style="left:895.38px;top:838.47px;font-size:11.50px;line-height:11.50px;color:#2c2c2c;font-weight:bold;transform:scaleX(0.9000);transform-origin:0 0;">8D</div>
<div class="bx" style="left:929px;top:804px;width:50px;height:48.5px;border-radius:4px 4px 0 0;background:linear-gradient(#b2b2b2,#9c9c9c 45%,#8a8a8a 75%,#6c6c6c)"></div>
<div class="bx" style="left:934px;top:809px;width:40px;height:24px;border-radius:3.5px;background:#fb9a73;box-shadow:inset 0 0 1.5px rgba(0,0,0,.35)"></div>
<div class="ab" style="left:947.67px;top:838.47px;font-size:11.50px;line-height:11.50px;color:#2c2c2c;font-weight:bold;transform:scaleX(0.9000);transform-origin:0 0;">8E</div>
<div class="bx" style="left:981px;top:804px;width:50px;height:48.5px;border-radius:4px 4px 0 0;background:linear-gradient(#b2b2b2,#9c9c9c 45%,#8a8a8a 75%,#6c6c6c)"></div>
<div class="bx" style="left:986px;top:809px;width:40px;height:24px;border-radius:3.5px;background:#d8966e;box-shadow:inset 0 0 1.5px rgba(0,0,0,.35)"></div>
<div class="ab" style="left:999.96px;top:838.47px;font-size:11.50px;line-height:11.50px;color:#2c2c2c;font-weight:bold;transform:scaleX(0.9000);transform-origin:0 0;">8F</div>
<div class="bx" style="left:1033px;top:804px;width:50px;height:48.5px;border-radius:4px 4px 0 0;background:linear-gradient(#b2b2b2,#9c9c9c 45%,#8a8a8a 75%,#6c6c6c)"></div>
<div class="bx" style="left:1038px;top:809px;width:40px;height:24px;border-radius:3.5px;background:#d7926b;box-shadow:inset 0 0 1.5px rgba(0,0,0,.35)"></div>
<div class="ab" style="left:1051.10px;top:838.47px;font-size:11.50px;line-height:11.50px;color:#2c2c2c;font-weight:bold;transform:scaleX(0.9000);transform-origin:0 0;">8G</div>
<div class="bx" style="left:1085px;top:804px;width:50px;height:48.5px;border-radius:4px 4px 0 0;background:linear-gradient(#b2b2b2,#9c9c9c 45%,#8a8a8a 75%,#6c6c6c)"></div>
<div class="bx" style="left:1090px;top:809px;width:40px;height:24px;border-radius:3.5px;background:#d99a74;box-shadow:inset 0 0 1.5px rgba(0,0,0,.35)"></div>
<div class="ab" style="left:1103.38px;top:838.47px;font-size:11.50px;line-height:11.50px;color:#2c2c2c;font-weight:bold;transform:scaleX(0.9000);transform-origin:0 0;">8H</div>
<div class="bx" style="left:1137px;top:804px;width:50px;height:48.5px;border-radius:4px 4px 0 0;background:linear-gradient(#b2b2b2,#9c9c9c 45%,#8a8a8a 75%,#6c6c6c)"></div>
<div class="bx" style="left:1142px;top:809px;width:40px;height:24px;border-radius:3.5px;background:#7f4a23;box-shadow:inset 0 0 1.5px rgba(0,0,0,.35)"></div>
<div class="ab" style="left:1157.68px;top:838.47px;font-size:11.50px;line-height:11.50px;color:#2c2c2c;font-weight:bold;transform:scaleX(0.9000);transform-origin:0 0;">8I</div>
<div class="bx" style="left:1189px;top:804px;width:50px;height:48.5px;border-radius:4px 4px 0 0;background:#2b2b2b"></div>
<div class="bx" style="left:1194px;top:809px;width:40px;height:24px;border-radius:3.5px;background:#d98c5e;box-shadow:inset 0 0 1.5px rgba(0,0,0,.35)"></div>
<div class="ab" style="left:1208.24px;top:838.47px;font-size:11.50px;line-height:11.50px;color:#ffffff;font-weight:bold;transform:scaleX(0.9000);transform-origin:0 0;">8J</div>
<div class="bx" style="left:43.0px;top:804px;width:2px;height:48px;background:#333"></div><div class="bx" style="left:40.5px;top:849.5px;width:7px;height:3px;border-radius:3.5px 3.5px 0 0;background:#333"></div><div class="bx" style="left:95.0px;top:804px;width:2px;height:48px;background:#333"></div><div class="bx" style="left:92.5px;top:849.5px;width:7px;height:3px;border-radius:3.5px 3.5px 0 0;background:#333"></div><div class="bx" style="left:147.0px;top:804px;width:2px;height:48px;background:#333"></div><div class="bx" style="left:144.5px;top:849.5px;width:7px;height:3px;border-radius:3.5px 3.5px 0 0;background:#333"></div><div class="bx" style="left:199.0px;top:804px;width:2px;height:48px;background:#333"></div><div class="bx" style="left:196.5px;top:849.5px;width:7px;height:3px;border-radius:3.5px 3.5px 0 0;background:#333"></div><div class="bx" style="left:251.0px;top:804px;width:2px;height:48px;background:#333"></div><div class="bx" style="left:248.5px;top:849.5px;width:7px;height:3px;border-radius:3.5px 3.5px 0 0;background:#333"></div><div class="bx" style="left:303.0px;top:804px;width:2px;height:48px;background:#333"></div><div class="bx" style="left:300.5px;top:849.5px;width:7px;height:3px;border-radius:3.5px 3.5px 0 0;background:#333"></div><div class="bx" style="left:355.0px;top:804px;width:2px;height:48px;background:#333"></div><div class="bx" style="left:352.5px;top:849.5px;width:7px;height:3px;border-radius:3.5px 3.5px 0 0;background:#333"></div><div class="bx" style="left:407.0px;top:804px;width:2px;height:48px;background:#333"></div><div class="bx" style="left:404.5px;top:849.5px;width:7px;height:3px;border-radius:3.5px 3.5px 0 0;background:#333"></div><div class="bx" style="left:459.0px;top:804px;width:2px;height:48px;background:#333"></div><div class="bx" style="left:456.5px;top:849.5px;width:7px;height:3px;border-radius:3.5px 3.5px 0 0;background:#333"></div><div class="bx" style="left:511.0px;top:804px;width:2px;height:48px;background:#333"></div><div class="bx" style="left:508.5px;top:849.5px;width:7px;height:3px;border-radius:3.5px 3.5px 0 0;background:#333"></div><div class="bx" style="left:563.0px;top:804px;width:2px;height:48px;background:#333"></div><div class="bx" style="left:560.5px;top:849.5px;width:7px;height:3px;border-radius:3.5px 3.5px 0 0;background:#333"></div><div class="bx" style="left:615.0px;top:804px;width:2px;height:48px;background:#333"></div><div class="bx" style="left:612.5px;top:849.5px;width:7px;height:3px;border-radius:3.5px 3.5px 0 0;background:#333"></div><div class="bx" style="left:667.0px;top:804px;width:2px;height:48px;background:#333"></div><div class="bx" style="left:664.5px;top:849.5px;width:7px;height:3px;border-radius:3.5px 3.5px 0 0;background:#333"></div><div class="bx" style="left:719.0px;top:804px;width:2px;height:48px;background:#333"></div><div class="bx" style="left:716.5px;top:849.5px;width:7px;height:3px;border-radius:3.5px 3.5px 0 0;background:#333"></div><div class="bx" style="left:771.0px;top:804px;width:2px;height:48px;background:#333"></div><div class="bx" style="left:768.5px;top:849.5px;width:7px;height:3px;border-radius:3.5px 3.5px 0 0;background:#333"></div><div class="bx" style="left:823.0px;top:804px;width:2px;height:48px;background:#333"></div><div class="bx" style="left:820.5px;top:849.5px;width:7px;height:3px;border-radius:3.5px 3.5px 0 0;background:#333"></div><div class="bx" style="left:875.0px;top:804px;width:2px;height:48px;background:#333"></div><div class="bx" style="left:872.5px;top:849.5px;width:7px;height:3px;border-radius:3.5px 3.5px 0 0;background:#333"></div><div class="bx" style="left:927.0px;top:804px;width:2px;height:48px;background:#333"></div><div class="bx" style="left:924.5px;top:849.5px;width:7px;height:3px;border-radius:3.5px 3.5px 0 0;background:#333"></div><div class="bx" style="left:979.0px;top:804px;width:2px;height:48px;background:#333"></div><div class="bx" style="left:976.5px;top:849.5px;width:7px;height:3px;border-radius:3.5px 3.5px 0 0;background:#333"></div><div class="bx" style="left:1031.0px;top:804px;width:2px;height:48px;background:#333"></div><div class="bx" style="left:1028.5px;top:849.5px;width:7px;height:3px;border-radius:3.5px 3.5px 0 0;background:#333"></div><div class="bx" style="left:1083.0px;top:804px;width:2px;height:48px;background:#333"></div><div class="bx" style="left:1080.5px;top:849.5px;width:7px;height:3px;border-radius:3.5px 3.5px 0 0;background:#333"></div><div class="bx" style="left:1135.0px;top:804px;width:2px;height:48px;background:#333"></div><div class="bx" style="left:1132.5px;top:849.5px;width:7px;height:3px;border-radius:3.5px 3.5px 0 0;background:#333"></div><div class="bx" style="left:1187.0px;top:804px;width:2px;height:48px;background:#333"></div><div class="bx" style="left:1184.5px;top:849.5px;width:7px;height:3px;border-radius:3.5px 3.5px 0 0;background:#333"></div><div class="bx" style="left:1239.0px;top:804px;width:2px;height:48px;background:#333"></div><div class="bx" style="left:1236.5px;top:849.5px;width:7px;height:3px;border-radius:3.5px 3.5px 0 0;background:#333"></div>
<div class="bx" style="left:1240px;top:804px;width:318px;height:60px;background:#2e2e2e"></div>
<div class="bx" style="left:1240.5px;top:804px;width:47.5px;height:18px;border-radius:4px 4px 0 0;background:linear-gradient(#b0b0b0,#8c8c8c)"></div>
<div class="bx" style="left:1240.5px;top:823px;width:47.5px;height:41px;background:linear-gradient(#a8a8a8,#7a7a7a)"></div>
<div class="bx" style="left:1255px;top:806px;width:18px;height:14px;border-radius:9px;background:radial-gradient(#999,#7a7a7a)"></div>
<div class="bx" style="left:1259.5px;top:809px;width:0;height:0;border-left:4.5px solid transparent;border-right:4.5px solid transparent;border-bottom:5px solid #333"></div>
<div class="bx" style="left:1248.5px;top:828px;width:32px;height:32px;border-radius:5px;border:3px solid #2a2a2a;background:linear-gradient(#b4b4b4 50%,#9a9a9a 50%)"></div>
<div class="bx" style="left:1257.5px;top:837px;width:14px;height:14px;background:#0a0a0a"></div>
<div class="bx" style="left:1289.5px;top:804px;width:45.5px;height:30px;border-radius:4px 4px 0 0;background:linear-gradient(#b4b4b4,#8e8e8e)"></div>
<div class="bx" style="left:1301.8px;top:808.5px;width:21px;height:21px;border-radius:50%;background:radial-gradient(circle at 50% 35%,#b8b8b8,#8a8a8a 60%,#7c7c7c)"></div>
<div class="bx" style="left:1336.0px;top:804px;width:44.5px;height:30px;border-radius:4px 4px 0 0;background:linear-gradient(#b4b4b4,#8e8e8e)"></div>
<div class="bx" style="left:1347.8px;top:808.5px;width:21px;height:21px;border-radius:50%;background:radial-gradient(circle at 50% 35%,#b8b8b8,#8a8a8a 60%,#7c7c7c)"></div>
<div class="bx" style="left:1381.5px;top:804px;width:43.5px;height:30px;border-radius:4px 4px 0 0;background:linear-gradient(#b4b4b4,#8e8e8e)"></div>
<div class="bx" style="left:1392.8px;top:808.5px;width:21px;height:21px;border-radius:50%;background:radial-gradient(circle at 50% 35%,#b8b8b8,#8a8a8a 60%,#7c7c7c)"></div>
<div class="bx" style="left:1426.0px;top:804px;width:44.2px;height:30px;border-radius:4px 4px 0 0;background:linear-gradient(#b4b4b4,#8e8e8e)"></div>
<div class="bx" style="left:1437.6px;top:808.5px;width:21px;height:21px;border-radius:50%;background:radial-gradient(circle at 50% 35%,#b8b8b8,#8a8a8a 60%,#7c7c7c)"></div>
<div class="bx" style="left:1471.0px;top:804px;width:44.7px;height:30px;border-radius:4px 4px 0 0;background:#2c2c2c"></div>
<div class="bx" style="left:1482.8px;top:808.5px;width:21px;height:21px;border-radius:50%;background:radial-gradient(circle at 50% 30%,#3c3c3c,#262626)"></div>
<div class="bx" style="left:1516.5px;top:804px;width:43.5px;height:30px;border-radius:4px 4px 0 0;background:linear-gradient(#b4b4b4,#8e8e8e)"></div>
<div class="bx" style="left:1527.8px;top:808.5px;width:21px;height:21px;border-radius:50%;background:radial-gradient(circle at 50% 35%,#b8b8b8,#8a8a8a 60%,#7c7c7c)"></div>
<div class="bx" style="left:1308.5px;top:814.8px;width:7.5px;height:7.5px;background:#333"></div>
<div class="bx" style="left:1355.5px;top:813.5px;width:0;height:0;border-top:5px solid transparent;border-bottom:5px solid transparent;border-left:9px solid #333"></div>
<div class="ab" style="left:1395.47px;top:813.19px;font-size:11.00px;line-height:11.00px;color:#333;font-weight:bold;">[··]</div>
<div class="ab" style="left:1442.63px;top:809.12px;font-size:19.00px;line-height:19.00px;color:#333;font-weight:bold;">∞</div>
<div class="bx" style="left:1485.5px;top:811px;width:15px;height:15px;border-radius:50%;border:2.5px solid #1c1c1c;border-left-color:transparent;border-right-color:transparent;transform:rotate(30deg)"></div>
<div class="bx" style="left:1289.5px;top:835.5px;width:135.5px;height:29px;border-radius:4px 4px 0 0;background:linear-gradient(#b8b8b8,#8c8c8c)"></div>
<div class="bx" style="left:1426px;top:835.5px;width:134px;height:29px;border-radius:4px 4px 0 0;background:linear-gradient(#b8b8b8,#8c8c8c)"></div>
<div class="bx" style="left:1309.5px;top:840px;width:20px;height:20px;border-radius:50%;background:radial-gradient(circle at 50% 35%,#b8b8b8,#888 60%,#7a7a7a)"></div>
<div class="bx" style="left:1523px;top:840px;width:20px;height:20px;border-radius:50%;background:radial-gradient(circle at 50% 35%,#b8b8b8,#888 60%,#7a7a7a)"></div>
<div class="ab" style="left:1313.96px;top:837.72px;font-size:21.00px;line-height:21.00px;color:#333;">«</div>
<div class="ab" style="left:1527.56px;top:837.72px;font-size:21.00px;line-height:21.00px;color:#333;">»</div>
<div class="ab" style="left:1347.50px;top:837.49px;font-size:26.00px;line-height:26.00px;color:#2e2e2e;font-weight:bold;transform:scaleX(0.7964);transform-origin:0 0;">Back</div>
<div class="ab" style="left:1453.00px;top:837.49px;font-size:26.00px;line-height:26.00px;color:#2e2e2e;font-weight:bold;transform:scaleX(0.9227);transform-origin:0 0;">Next</div>
</body></html>
